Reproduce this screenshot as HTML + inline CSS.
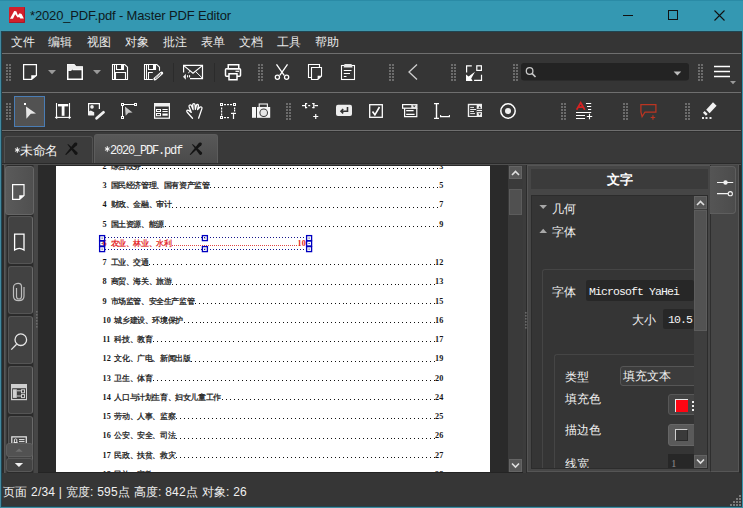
<!DOCTYPE html>
<html><head><meta charset="utf-8">
<style>
*{box-sizing:border-box;margin:0;padding:0}
html,body{width:743px;height:508px;overflow:hidden;background:#353535;font-family:"Liberation Sans",sans-serif}
.a{position:absolute}
svg{position:absolute;overflow:visible}
#title{left:0;top:0;width:743px;height:31px;background:#3498b2}
#title .t{left:30px;top:8px;font-size:13px;color:#0e1a20;letter-spacing:-0.15px;white-space:nowrap}
.menu{top:34px;font-size:12px;color:#eaeaea;white-space:nowrap}
.hl{left:1px;width:741px;height:1px;background:#6f6f6f}
.grip{width:5px;background-image:radial-gradient(circle,#8a8a8a 0.7px,transparent 0.9px);background-size:2.5px 2.5px}
.num,.pn{font-family:"Liberation Serif",serif;font-weight:bold;font-size:8.2px;letter-spacing:0.2px;line-height:8px;white-space:nowrap}
.txt{font-family:"Liberation Serif",serif;font-weight:normal;font-size:8px;letter-spacing:-0.4px;line-height:8px;-webkit-text-stroke:0.25px currentColor;white-space:nowrap}
.dt{position:absolute;width:1.25px;height:1.25px;background:#111}
.dots{height:1.2px;background-image:linear-gradient(90deg,#000 0 1.2px,transparent 1.2px);background-size:4px 1.2px;background-position:right top;background-repeat:repeat-x}
.vsep{width:1px;background:#2a2a2a}
</style></head><body>
<!-- window border -->
<div class="a" style="left:0;top:0;width:743px;height:508px;background:#353535"></div>

<!-- title bar -->
<div id="title" class="a">
  <div class="a" style="left:9px;top:7px;width:16px;height:16px;background:#d2202b;border-radius:1px;box-shadow:inset -1px -1px 0 #a51a2a"></div>
  <svg style="left:0;top:0" width="40" height="31" viewBox="0 0 40 31"><path d="M10 18.8 L14.2 11 L16.3 11.3 L17.9 15.2 L19.6 13.2 L21.6 14 L23.8 18.4 L20.3 18.6 L19.2 17 L17.6 17.6 L15.2 14.2 L13 18.8 Z" fill="#fff"/></svg>
  <div class="a t">*2020_PDF.pdf - Master PDF Editor</div>
  <div class="a" style="left:623px;top:15px;width:10px;height:1px;background:#111"></div>
  <div class="a" style="left:668px;top:10px;width:10px;height:10px;border:1px solid #111"></div>
  <svg style="left:714px;top:10px" width="11" height="11" viewBox="0 0 11 11"><path d="M0.5 0.5 L10.5 10.5 M10.5 0.5 L0.5 10.5" stroke="#111" stroke-width="1.1"/></svg>
</div>

<!-- menu -->
<div class="a menu" style="left:11px">文件</div>
<div class="a menu" style="left:48px">编辑</div>
<div class="a menu" style="left:87px">视图</div>
<div class="a menu" style="left:125px">对象</div>
<div class="a menu" style="left:163px">批注</div>
<div class="a menu" style="left:201px">表单</div>
<div class="a menu" style="left:239px">文档</div>
<div class="a menu" style="left:277px">工具</div>
<div class="a menu" style="left:315px">帮助</div>

<div class="a hl" style="top:53px"></div>
<div class="a hl" style="top:92px"></div>
<div class="a hl" style="top:130px"></div>

<!-- TOOLBAR1 -->
<div id="tb1"><svg style="left:0;top:0" width="743" height="508" viewBox="0 0 743 508">
<defs>
<g id="grip" fill="#6c6c6c">
<rect x="0" y="0" width="2" height="2"/><rect x="3" y="0" width="2" height="2"/>
<rect x="0" y="3" width="2" height="2"/><rect x="3" y="3" width="2" height="2"/>
<rect x="0" y="6" width="2" height="2"/><rect x="3" y="6" width="2" height="2"/>
<rect x="0" y="9" width="2" height="2"/><rect x="3" y="9" width="2" height="2"/>
<rect x="0" y="12" width="2" height="2"/><rect x="3" y="12" width="2" height="2"/>
<rect x="0" y="15" width="2" height="2"/><rect x="3" y="15" width="2" height="2"/>
</g>
</defs>
<!-- grips toolbar1 -->
<use href="#grip" x="6" y="64"/><use href="#grip" x="258" y="64"/><use href="#grip" x="389" y="64"/>
<use href="#grip" x="451" y="64"/><use href="#grip" x="513" y="64"/><use href="#grip" x="698" y="64"/>
<!-- grips toolbar2 -->
<use href="#grip" x="6" y="103"/><use href="#grip" x="286" y="103"/><use href="#grip" x="561" y="103"/>
<use href="#grip" x="623" y="103"/><use href="#grip" x="685" y="103"/>

<g fill="none" stroke="#fff" stroke-width="1.5">
<!-- new doc -->
<path d="M23.6 64.6 H36.4 V75.5 L31.6 79.4 H23.6 Z" stroke-width="1.25"/>
<!-- folder -->
<path d="M67.75 64.75 H74 L76 67 H82.25 V79.25 H67.75 Z"/>
<path d="M72.5 69.5 H82.25"/>
<!-- save -->
<path d="M112.5 64.5 H124.8 L127.5 67.2 V79.5 H112.5 Z" stroke-width="1.1"/>
<path d="M114.5 65 V79" stroke-width="1"/>
<path d="M116.5 65 V69.5 H123.5 V65" stroke-width="1.1"/>
<path d="M115.5 79 V72.5 H125.5 V79" stroke-width="1.1"/>
<!-- save as -->
<path d="M152.8 79.5 H144.5 V64.5 H156.8 L159.5 67.2 V70.8" stroke-width="1.1"/>
<path d="M146.5 65 V79" stroke-width="1"/>
<path d="M148.5 65 V69.5 H155.5 V65" stroke-width="1.1"/>
<path d="M148.5 79 V72.5 H152.8" stroke-width="1.1"/>
<!-- printer -->
<rect x="228.25" y="64.75" width="10.5" height="4"/>
<rect x="225.5" y="68.75" width="15" height="7.5" rx="1"/>
<!-- copy -->
<path d="M311 77.5 H308.5 V64.5 H319.5 V67" stroke-width="1.1"/>
<path d="M311.5 67.5 H321.5 V76 L317.8 79.5 H311.5 Z" stroke-width="1.1"/>
<!-- clipboard -->
<rect x="341.5" y="65.5" width="13" height="14" stroke-width="1.1"/>
<!-- fit -->
<path d="M466.6 72.6 V65.8 H471.8" stroke-width="1.2"/>
<path d="M474.1 80.3 H481.5 V74.8" stroke-width="1.2"/>
<!-- hamburger -->
<path d="M714 66.5 H730 M714 71.5 H730 M714 76.5 H730"/>
</g>
<g fill="#fff">
<path d="M36.5 75.25 L31.25 75.25 L31.25 79.5 Z"/>
<path d="M67.5 64.5 H74 L76 66.5 H82.5 V69.5 H72.5 L71 71 H67.5 Z" fill="#ececec"/>
<path d="M321.8 75.8 L317.6 75.8 L317.6 79.8 Z"/>
<path d="M344.5 64 H351.5 L352.6 67.6 H343.6 Z" fill="#e8e8e8"/>
<rect x="121" y="65" width="2.5" height="4"/><rect x="153" y="65" width="2.5" height="4"/>
<path d="M466 74.6 L468.6 76.6 L475 71.8 L471.2 78.6 L472.6 80.9 H466 Z"/>
</g>
<g fill="#9a9a9a">
<path d="M48 70 H56 L52 74.2 Z"/>
<path d="M93 70 H101 L97 74.2 Z"/>
<path d="M730 81 H736 L733 84.2 Z"/>
</g>
<!-- save as pencil -->
<path d="M155 78.9 L161.6 73.1" stroke="#fff" stroke-width="3.2" stroke-linecap="round"/>
<path d="M155.4 78.5 L161.2 73.5" stroke="#353535" stroke-width="1.2" stroke-dasharray="1 0.6"/>
<!-- mail -->
<g fill="none" stroke="#fff" stroke-width="1.2">
<path d="M183.6 72.6 V65.4 H202.5 V78.6 H190"/>
<path d="M183.8 65.6 L193 73.2 L202.3 65.6"/>
<path d="M195.7 71.6 L202 77.8 M190.2 71.2 L188.2 73" stroke-width="1"/>
</g>
<path d="M183 76.7 L185.9 73.8 V79.7 Z" fill="#f0f0f0"/>
<rect x="187" y="75.2" width="1.1" height="2.2" fill="#fff"/><rect x="189" y="75.2" width="1.1" height="2.2" fill="#fff"/>
<!-- separators -->
<rect x="173" y="63" width="1" height="19" fill="#2b2b2b"/>
<rect x="214" y="63" width="1" height="19" fill="#2b2b2b"/>
<!-- printer details -->
<rect x="229" y="73.75" width="8" height="6" fill="#353535" stroke="#fff" stroke-width="1.5"/>
<path d="M235.5 71.3 H239" stroke="#fff" stroke-width="1.2"/>
<!-- scissors -->
<g fill="none" stroke="#fff" stroke-width="1.3">
<path d="M276.5 64.3 L284.2 75.3 M287.5 64.3 L279.8 75.3"/>
<circle cx="277.4" cy="77.3" r="2.1"/><circle cx="286.6" cy="77.3" r="2.1"/>
</g>
<!-- clipboard lines -->
<path d="M343.8 70.5 H351.5 M343.8 73.5 H350 M343.8 76.5 H346.5" stroke="#fff" stroke-width="1"/>
<!-- back arrow -->
<path d="M417 64.5 L409 72 L417 79.5" fill="none" stroke="#cfcfcf" stroke-width="1.3"/>
<!-- fit -->
<rect x="476.8" y="65.8" width="4.6" height="4.6" fill="none" stroke="#fff" stroke-width="1.2"/>
<!-- search -->
<rect x="521" y="63" width="168" height="17.5" rx="3" fill="#232323"/>
<circle cx="529.6" cy="71" r="3.3" fill="none" stroke="#c8c8c8" stroke-width="1.3"/>
<path d="M532 73.4 L535.5 77" stroke="#c8c8c8" stroke-width="1.6"/>
<path d="M673.6 71.6 H681.2 L677.4 75.5 Z" fill="#bdbdbd"/>
</svg>
</div>
<!-- TOOLBAR2 -->
<div id="tb2"><div class="a" style="left:14px;top:96px;width:31px;height:31px;background:#525252;border:1px solid #4a7db5"></div>
<svg style="left:0;top:0" width="743" height="508" viewBox="0 0 743 508">
<!-- cursor -->
<rect x="24" y="103" width="2" height="2" fill="#fff"/>
<path d="M26 106.5 L36 113.5 L30.8 113.8 L26.4 118.7 Z" fill="#e6e6e6"/>
<!-- T tool -->
<g stroke="#fff" fill="none">
<path d="M56.5 103 V117 M69.5 103 V117" stroke-width="1.1"/>
<path d="M56 117.4 H70" stroke-width="1.1"/>
</g>
<path d="M54.8 117.4 L57.2 115.6 V119.2 Z M71.2 117.4 L68.8 115.6 V119.2 Z" fill="#fff"/>
<rect x="58" y="104" width="10.2" height="2.4" fill="#fff"/>
<rect x="61.7" y="104" width="2.8" height="11.8" fill="#fff"/>
<!-- image edit -->
<path d="M88.6 115 V103.6 H99.4 V109" fill="none" stroke="#fff" stroke-width="1.2"/>
<circle cx="92" cy="106.9" r="1.8" fill="#f0f0f0"/>
<path d="M88.2 115.5 V111.8 L90.8 110.6 L94.2 112.2 V115.5 Z" fill="#f0f0f0"/>
<path d="M96.6 118.3 L103.5 112.3" stroke="#f0f0f0" stroke-width="2.8" stroke-linecap="round"/>
<!-- polyline arrow -->
<path d="M124 104.5 H134 M122.5 106 V116" stroke="#fff" stroke-width="1"/>
<g fill="none" stroke="#fff" stroke-width="1">
<rect x="121.5" y="103.5" width="2" height="2"/><rect x="134.5" y="103.5" width="2" height="2"/><rect x="121.5" y="116.5" width="2" height="2"/>
</g>
<path d="M124.9 106.5 L132.6 112.5 L128.6 112.8 L125.7 115.8 Z" fill="#c8c8c8"/>
<!-- form -->
<rect x="154.6" y="103.6" width="14.8" height="14.6" fill="none" stroke="#fff" stroke-width="1.2"/>
<rect x="154" y="103" width="16" height="3.5" fill="#f0f0f0"/>
<g stroke="#fff" fill="none" stroke-width="1">
<rect x="156.5" y="109.5" width="4" height="2"/><rect x="156.5" y="113.5" width="4" height="2.2"/>
<path d="M162.4 109.5 H167.7 M162.4 111.5 H167.7"/>
</g>
<rect x="162.4" y="113.5" width="5.3" height="2.2" fill="#fff"/>
<!-- hand -->
<path d="M192.5 118.2 L187.2 112.2 C186.3 111.1 186.9 109.6 188.4 110.3 L191.3 112.4 L189.1 106.7 C188.6 105.1 190.6 104.1 191.4 105.6 L193.1 109.6 L192.7 104.9 C192.6 103.3 194.9 103.2 195 104.8 L195.4 109.4 L196.4 105.4 C196.8 104 198.7 104.3 198.4 105.8 L197.6 109.6 L199.7 107.3 C200.7 106.3 202.5 107.1 201.9 108.6 L198.6 118.2" fill="none" stroke="#fff" stroke-width="1.3" stroke-linejoin="round" stroke-linecap="round"/>
<!-- select text area -->
<g fill="none" stroke="#fff" stroke-width="1">
<rect x="220.5" y="103.5" width="2" height="2"/><rect x="233.5" y="103.5" width="2" height="2"/><rect x="220.5" y="116.5" width="2" height="2"/>
</g>
<g fill="#fff">
<rect x="224" y="104" width="2" height="1.2"/><rect x="227" y="104" width="2" height="1.2"/><rect x="230" y="104" width="2" height="1.2"/>
<rect x="221" y="107.5" width="1.2" height="2"/><rect x="221" y="110.5" width="1.2" height="2"/><rect x="221" y="113.5" width="1.2" height="2"/>
<rect x="234" y="107.5" width="1.2" height="2"/><rect x="234" y="110" width="1.2" height="1.5"/>
<rect x="224" y="117" width="2" height="1.2"/><rect x="227" y="117" width="2" height="1.2"/>
<rect x="231" y="112.8" width="5" height="1.2"/><rect x="232.9" y="112.8" width="1.2" height="6.2"/>
</g>
<!-- camera -->
<rect x="252" y="107" width="4" height="10.8" fill="#f4f4f4"/>
<rect x="257" y="107" width="13.2" height="10.8" fill="#f4f4f4"/>
<rect x="259.2" y="104" width="8.2" height="3.5" fill="none" stroke="#f4f4f4" stroke-width="1.1"/>
<circle cx="263.7" cy="112.8" r="4.3" fill="#353535"/>
<circle cx="263.7" cy="112.8" r="3.3" fill="#e6e6e6"/>
<!-- link+ -->
<g fill="#fff">
<rect x="302" y="105" width="3" height="1.2"/>
<rect x="305" y="103" width="1.2" height="5.2"/><rect x="305" y="103" width="2.2" height="1.2"/><rect x="305" y="107" width="2.2" height="1.2"/>
<rect x="308.2" y="105" width="2" height="1.2"/>
<rect x="313.2" y="103" width="1.2" height="5.2"/><rect x="312.2" y="103" width="2.2" height="1.2"/><rect x="312.2" y="107" width="2.2" height="1.2"/>
<rect x="314.4" y="105" width="3.6" height="1.2"/>
</g>
<path d="M313.2 116.5 H318.3 M315.75 114 V119" stroke="#fff" stroke-width="1.2"/>
<!-- button -->
<rect x="336" y="104.7" width="16" height="11.2" rx="2" fill="#ededed"/>
<path d="M347.5 107 V111.2 H341 M343.2 109 L341 111.2 L343.2 113.4" fill="none" stroke="#353535" stroke-width="1.6"/>
<!-- checkbox -->
<rect x="369.7" y="104.7" width="12.6" height="12.6" fill="none" stroke="#fff" stroke-width="1.3"/>
<path d="M372.5 111.5 L374.9 114.8 L379.5 107" fill="none" stroke="#fff" stroke-width="1.6"/>
<!-- combo -->
<g fill="none" stroke="#fff" stroke-width="1.2">
<rect x="402.6" y="104.6" width="14.2" height="3.6"/>
<path d="M404.6 108.2 V116.6 H416.8 V108.2"/>
</g>
<path d="M406.2 110.6 H413.6 M406.2 114.4 H414.6" stroke="#fff" stroke-width="1.1"/>
<rect x="411.3" y="104" width="5.8" height="4.6" fill="#e8e8e8"/>
<path d="M412.6 105.4 H415.8 L414.2 107.2 Z" fill="#353535"/>
<!-- text field -->
<g fill="none" stroke="#fff">
<path d="M434 103.6 H439 M436.5 103.6 V118.4 M434 118.4 H439" stroke-width="1.4"/>
<path d="M440 116.6 H449.5 M440.6 115 V117.2 M449.4 115 V117.2" stroke-width="1.1"/>
</g>
<!-- list -->
<rect x="467.8" y="103.8" width="14.2" height="13.2" fill="#f0f0f0"/>
<rect x="469.2" y="105.2" width="7.5" height="10.7" fill="#353535"/>
<path d="M470.2 107.4 H474 M470.2 109.5 H476 M470.2 111.5 H474 M470.2 113.6 H475" stroke="#fff" stroke-width="0.9"/>
<rect x="476.7" y="108.9" width="5.3" height="1" fill="#353535"/>
<rect x="476.7" y="111.1" width="5.3" height="1" fill="#353535"/>
<path d="M478.3 108.2 H481 L479.65 106 Z M478.3 113.2 H481 L479.65 115.4 Z" fill="#353535"/>
<!-- radio -->
<circle cx="508" cy="111" r="7.2" fill="none" stroke="#fff" stroke-width="1.5"/>
<circle cx="508" cy="111" r="3" fill="#f0f0f0"/>
<!-- A lines + -->
<path d="M576.6 109.8 L580.7 102.8 L584.8 109.8 M578.3 107.2 H583.1" fill="none" stroke="#d42222" stroke-width="1.7"/>
<path d="M586 103.5 H591.2 M587 106.5 H591.2 M588 109.5 H591.2 M576 112.5 H591.2 M576 115.5 H585 M576 118.5 H585" stroke="#fff" stroke-width="1.1"/>
<path d="M586.8 116.5 H592.2 M589.5 113.8 V119.2" stroke="#fff" stroke-width="1.1"/>
<!-- comment red -->
<path d="M640.9 104.6 H655.9 V112 H645 L642.1 116.6 L640.9 112 Z" fill="none" stroke="#bb3522" stroke-width="1.25" stroke-linejoin="miter"/>
<path d="M650.7 117.5 H655.2 M652.95 115.3 V119.8" stroke="#bb3522" stroke-width="1.2"/>
<!-- eraser -->
<path d="M706.2 109.8 L713 102.2 L716.6 105.8 L709.6 113.2 Z" fill="#f2f2f2"/>
<path d="M703.8 111.8 L706.8 114.8" stroke="#f2f2f2" stroke-width="2.5"/>
<rect x="702" y="117" width="2" height="2" fill="#e8e8e8"/><rect x="705.5" y="117" width="2" height="2" fill="#e8e8e8"/><rect x="709.5" y="117" width="2" height="2" fill="#e8e8e8"/>
</svg>
</div>
<!-- TABS -->
<div id="tabs"><div class="a" style="left:1px;top:131px;width:741px;height:33px;background:#393939"></div>
<div class="a" style="left:1px;top:131px;width:741px;height:1px;background:#2e2e2e"></div>
<div class="a" style="left:4px;top:136px;width:89px;height:28px;background:#3c3c3c;border:1px solid #515151;border-bottom:none;border-radius:3px 3px 0 0"></div>
<div class="a" style="left:94px;top:134px;width:124px;height:30px;background:linear-gradient(#585858,#4a4a4a);border:1px solid #5c5c5c;border-bottom:none;border-radius:3px 3px 0 0"></div>
<div class="a" style="left:20px;top:141.5px;font-size:13px;letter-spacing:-0.5px;color:#f4f4f4;white-space:nowrap">未命名</div>
<div class="a" style="left:110px;top:144px;font-size:12px;letter-spacing:-1.2px;color:#f4f4f4;white-space:nowrap;font-family:'Liberation Mono',monospace">2020_PDF.pdf</div>
<svg style="left:0;top:0" width="743" height="508" viewBox="0 0 743 508">
<g fill="#141414" transform="translate(0 0)">
<path d="M200 142.6 C201.7 142.4 202.4 143.9 201.3 145.2 L190.6 154.9 L189.7 154.6 L198.4 143.6 C198.9 143 199.4 142.7 200 142.6 Z"/>
<path d="M191.8 144.2 L192.9 144.3 L201.6 152 C202.6 153 202.1 155 200.5 154.9 C199.9 154.8 199.5 154.4 199.1 153.9 Z"/>
</g>
<g fill="#141414" transform="translate(-124.5 0)">
<path d="M200 142.6 C201.7 142.4 202.4 143.9 201.3 145.2 L190.6 154.9 L189.7 154.6 L198.4 143.6 C198.9 143 199.4 142.7 200 142.6 Z"/>
<path d="M191.8 144.2 L192.9 144.3 L201.6 152 C202.6 153 202.1 155 200.5 154.9 C199.9 154.8 199.5 154.4 199.1 153.9 Z"/>
</g>
<g stroke="#f4f4f4" stroke-width="1.1">
<path d="M17.3 147.3 V152.7 M15 148.6 L19.6 151.4 M15 151.4 L19.6 148.6"/>
<path d="M107.3 146.3 V151.7 M105 147.6 L109.6 150.4 M105 150.4 L109.6 147.6"/>
</g>
</svg>
<div class="a" style="left:1px;top:163px;width:741px;height:1px;background:#2a2a2a"></div>
<div class="a" style="left:1px;top:164px;width:741px;height:1px;background:#4f4f4f"></div>
</div>
<!-- SIDEBAR -->
<div id="side"><div class="a" style="left:1px;top:165px;width:37px;height:308px;background:#353535"></div>
<div class="a" style="left:1px;top:165px;width:1px;height:308px;background:#1f4552"></div>
<div class="a" style="left:2px;top:165px;width:2px;height:308px;background:#2b2b2b"></div>
<div class="a" style="left:4px;top:165px;width:1px;height:308px;background:#575757"></div>
<div class="a" style="left:5px;top:165px;width:1px;height:308px;background:#4a4a4a"></div>
<div class="a" style="left:6px;top:165px;width:1px;height:308px;background:#3a3a3a"></div>
<div class="a" style="left:7px;top:165px;width:26px;height:308px;background:#2b2b2b"></div>
<div class="a" style="left:33px;top:165px;width:1px;height:308px;background:#3a3a3a"></div>
<div class="a" style="left:34px;top:165px;width:4px;height:308px;background:#464646"></div>
<div class="a" style="left:5px;top:166px;width:29px;height:49px;background:linear-gradient(90deg,#5a5a5a,#505050);border:1px solid #666;border-radius:3px"></div>
<div class="a" style="left:8px;top:216px;width:25px;height:48px;background:#424242;border:1px solid #555;border-right-color:#6a6a6a;border-radius:3px"></div>
<div class="a" style="left:8px;top:266px;width:25px;height:48px;background:#424242;border:1px solid #555;border-right-color:#6a6a6a;border-radius:3px"></div>
<div class="a" style="left:8px;top:316px;width:25px;height:48px;background:#424242;border:1px solid #555;border-right-color:#6a6a6a;border-radius:3px"></div>
<div class="a" style="left:8px;top:366px;width:25px;height:48px;background:#424242;border:1px solid #555;border-right-color:#6a6a6a;border-radius:3px"></div>
<div class="a" style="left:8px;top:416px;width:25px;height:48px;background:#424242;border:1px solid #555;border-right-color:#6a6a6a;border-radius:3px"></div>
<svg style="left:0;top:0" width="743" height="508" viewBox="0 0 743 508">
<!-- doc -->
<path d="M12.6 184.6 H24 V195.5 L19.6 199.4 H12.6 Z" fill="none" stroke="#fff" stroke-width="1.2"/>
<path d="M24 195.25 L19.25 195.25 L19.25 199.5 Z" fill="#fff"/>
<!-- bookmark -->
<path d="M14.6 234.2 H24 V250 Q19.3 246.6 14.6 250 Z" fill="none" stroke="#fff" stroke-width="1.3"/>
<!-- clip -->
<path d="M16.5 288 V296.5 C16.5 298 17.5 299 19 299 C20.5 299 21.5 298 21.5 296.5 V286.5 C21.5 284.5 20 283.3 18.3 283.3 C16.3 283.3 13.5 284.5 13.5 287 V296 C13.5 299 15.7 300.7 18.7 300.7 C21.8 300.7 24 299 24 296 V287" fill="none" stroke="#bdbdbd" stroke-width="1.2"/>
<!-- search -->
<circle cx="20.8" cy="339.7" r="5.8" fill="none" stroke="#e6e6e6" stroke-width="1.3"/>
<path d="M16.6 344.2 L11.3 349.6" stroke="#e6e6e6" stroke-width="1.3"/>
<!-- layers -->
<rect x="11" y="384" width="16" height="16.2" fill="#cfcfcf"/>
<rect x="12.2" y="388.2" width="13.8" height="10.8" fill="#3f3f3f"/>
<rect x="13" y="389.3" width="3.8" height="8.6" fill="#cfcfcf"/>
<path d="M16.8 390.8 H21 M16.8 396 H21" stroke="#cfcfcf" stroke-width="1"/>
<rect x="21.5" y="389.8" width="3" height="3" fill="#3f3f3f" stroke="#cfcfcf" stroke-width="1"/>
<rect x="21.5" y="394.6" width="3" height="3" fill="#3f3f3f" stroke="#cfcfcf" stroke-width="1"/>
<!-- icon6 partial -->
<path d="M11.8 444 V436.8 H26.3 V444" fill="none" stroke="#e6e6e6" stroke-width="1.2"/>
<path d="M13.6 442.5 H17.6 M14.4 442.5 V439.8 C14.4 438.5 16.8 438.5 16.8 439.8 V442.5" fill="none" stroke="#e6e6e6" stroke-width="1"/>
<path d="M19 439.6 H24.5 M19 441.6 H24.5" stroke="#e6e6e6" stroke-width="1"/>
<!-- splitter grip -->
<g fill="#6a6a6a"><rect x="36" y="311" width="1.6" height="1.6"/><rect x="36" y="314" width="1.6" height="1.6"/><rect x="36" y="317" width="1.6" height="1.6"/><rect x="36" y="320" width="1.6" height="1.6"/><rect x="36" y="323" width="1.6" height="1.6"/><rect x="36" y="326" width="1.6" height="1.6"/></g>
</svg>
<div class="a" style="left:6px;top:443px;width:26.5px;height:14px;background:#525252;border:1px solid #5e5e5e;border-radius:3px"></div>
<div class="a" style="left:6px;top:458px;width:26.5px;height:14px;background:#434343;border:1px solid #585858;border-radius:3px"></div>
<svg style="left:0;top:0" width="743" height="508" viewBox="0 0 743 508">
<path d="M15.4 451.8 H22.7 L19.05 448.4 Z" fill="#6e6e6e"/>
<path d="M14.8 462.9 H23.1 L18.95 467 Z" fill="#f0f0f0"/>
</svg>
</div>
<!-- DOC -->
<div id="doc">
<div class="a" style="left:38px;top:165px;width:471px;height:308px;background:#2a2a2a"></div>
<div class="a" id="page" style="left:56px;top:165px;width:434px;height:307px;background:#fff;overflow:hidden">
<div class="a num" style="left:46.5px;top:-2.10px;color:#161616">2</div>
<div class="a txt" style="left:54.599999999999994px;top:-2.20px;color:#161616">综合政务</div>
<i class="dt" style="left:86px;top:3px"></i>
<i class="dt" style="left:90px;top:3px"></i>
<i class="dt" style="left:94px;top:3px"></i>
<i class="dt" style="left:98px;top:3px"></i>
<i class="dt" style="left:102px;top:3px"></i>
<i class="dt" style="left:106px;top:3px"></i>
<i class="dt" style="left:110px;top:3px"></i>
<i class="dt" style="left:114px;top:3px"></i>
<i class="dt" style="left:118px;top:3px"></i>
<i class="dt" style="left:122px;top:3px"></i>
<i class="dt" style="left:126px;top:3px"></i>
<i class="dt" style="left:130px;top:3px"></i>
<i class="dt" style="left:134px;top:3px"></i>
<i class="dt" style="left:138px;top:3px"></i>
<i class="dt" style="left:142px;top:3px"></i>
<i class="dt" style="left:146px;top:3px"></i>
<i class="dt" style="left:150px;top:3px"></i>
<i class="dt" style="left:154px;top:3px"></i>
<i class="dt" style="left:158px;top:3px"></i>
<i class="dt" style="left:162px;top:3px"></i>
<i class="dt" style="left:166px;top:3px"></i>
<i class="dt" style="left:170px;top:3px"></i>
<i class="dt" style="left:174px;top:3px"></i>
<i class="dt" style="left:178px;top:3px"></i>
<i class="dt" style="left:182px;top:3px"></i>
<i class="dt" style="left:186px;top:3px"></i>
<i class="dt" style="left:190px;top:3px"></i>
<i class="dt" style="left:194px;top:3px"></i>
<i class="dt" style="left:198px;top:3px"></i>
<i class="dt" style="left:202px;top:3px"></i>
<i class="dt" style="left:206px;top:3px"></i>
<i class="dt" style="left:210px;top:3px"></i>
<i class="dt" style="left:214px;top:3px"></i>
<i class="dt" style="left:218px;top:3px"></i>
<i class="dt" style="left:222px;top:3px"></i>
<i class="dt" style="left:226px;top:3px"></i>
<i class="dt" style="left:230px;top:3px"></i>
<i class="dt" style="left:234px;top:3px"></i>
<i class="dt" style="left:237px;top:3px"></i>
<i class="dt" style="left:241px;top:3px"></i>
<i class="dt" style="left:245px;top:3px"></i>
<i class="dt" style="left:249px;top:3px"></i>
<i class="dt" style="left:253px;top:3px"></i>
<i class="dt" style="left:257px;top:3px"></i>
<i class="dt" style="left:261px;top:3px"></i>
<i class="dt" style="left:265px;top:3px"></i>
<i class="dt" style="left:269px;top:3px"></i>
<i class="dt" style="left:273px;top:3px"></i>
<i class="dt" style="left:277px;top:3px"></i>
<i class="dt" style="left:281px;top:3px"></i>
<i class="dt" style="left:285px;top:3px"></i>
<i class="dt" style="left:289px;top:3px"></i>
<i class="dt" style="left:293px;top:3px"></i>
<i class="dt" style="left:297px;top:3px"></i>
<i class="dt" style="left:301px;top:3px"></i>
<i class="dt" style="left:305px;top:3px"></i>
<i class="dt" style="left:309px;top:3px"></i>
<i class="dt" style="left:313px;top:3px"></i>
<i class="dt" style="left:317px;top:3px"></i>
<i class="dt" style="left:321px;top:3px"></i>
<i class="dt" style="left:325px;top:3px"></i>
<i class="dt" style="left:329px;top:3px"></i>
<i class="dt" style="left:333px;top:3px"></i>
<i class="dt" style="left:337px;top:3px"></i>
<i class="dt" style="left:341px;top:3px"></i>
<i class="dt" style="left:345px;top:3px"></i>
<i class="dt" style="left:349px;top:3px"></i>
<i class="dt" style="left:353px;top:3px"></i>
<i class="dt" style="left:357px;top:3px"></i>
<i class="dt" style="left:361px;top:3px"></i>
<i class="dt" style="left:365px;top:3px"></i>
<i class="dt" style="left:369px;top:3px"></i>
<i class="dt" style="left:373px;top:3px"></i>
<i class="dt" style="left:377px;top:3px"></i>
<i class="dt" style="left:381px;top:3px"></i>
<div class="a pn" style="right:46.5px;top:-2.10px;color:#161616">3</div>
<div class="a num" style="left:46.5px;top:17.15px;color:#161616">3</div>
<div class="a txt" style="left:54.599999999999994px;top:17.05px;color:#161616">国民经济管理、国有资产监管</div>
<i class="dt" style="left:154px;top:22px"></i>
<i class="dt" style="left:158px;top:22px"></i>
<i class="dt" style="left:162px;top:22px"></i>
<i class="dt" style="left:166px;top:22px"></i>
<i class="dt" style="left:170px;top:22px"></i>
<i class="dt" style="left:174px;top:22px"></i>
<i class="dt" style="left:178px;top:22px"></i>
<i class="dt" style="left:182px;top:22px"></i>
<i class="dt" style="left:186px;top:22px"></i>
<i class="dt" style="left:190px;top:22px"></i>
<i class="dt" style="left:194px;top:22px"></i>
<i class="dt" style="left:198px;top:22px"></i>
<i class="dt" style="left:202px;top:22px"></i>
<i class="dt" style="left:206px;top:22px"></i>
<i class="dt" style="left:210px;top:22px"></i>
<i class="dt" style="left:214px;top:22px"></i>
<i class="dt" style="left:218px;top:22px"></i>
<i class="dt" style="left:222px;top:22px"></i>
<i class="dt" style="left:226px;top:22px"></i>
<i class="dt" style="left:230px;top:22px"></i>
<i class="dt" style="left:234px;top:22px"></i>
<i class="dt" style="left:238px;top:22px"></i>
<i class="dt" style="left:242px;top:22px"></i>
<i class="dt" style="left:246px;top:22px"></i>
<i class="dt" style="left:250px;top:22px"></i>
<i class="dt" style="left:254px;top:22px"></i>
<i class="dt" style="left:258px;top:22px"></i>
<i class="dt" style="left:262px;top:22px"></i>
<i class="dt" style="left:266px;top:22px"></i>
<i class="dt" style="left:270px;top:22px"></i>
<i class="dt" style="left:274px;top:22px"></i>
<i class="dt" style="left:278px;top:22px"></i>
<i class="dt" style="left:282px;top:22px"></i>
<i class="dt" style="left:286px;top:22px"></i>
<i class="dt" style="left:290px;top:22px"></i>
<i class="dt" style="left:294px;top:22px"></i>
<i class="dt" style="left:298px;top:22px"></i>
<i class="dt" style="left:302px;top:22px"></i>
<i class="dt" style="left:306px;top:22px"></i>
<i class="dt" style="left:310px;top:22px"></i>
<i class="dt" style="left:313px;top:22px"></i>
<i class="dt" style="left:317px;top:22px"></i>
<i class="dt" style="left:321px;top:22px"></i>
<i class="dt" style="left:325px;top:22px"></i>
<i class="dt" style="left:329px;top:22px"></i>
<i class="dt" style="left:333px;top:22px"></i>
<i class="dt" style="left:337px;top:22px"></i>
<i class="dt" style="left:341px;top:22px"></i>
<i class="dt" style="left:345px;top:22px"></i>
<i class="dt" style="left:349px;top:22px"></i>
<i class="dt" style="left:353px;top:22px"></i>
<i class="dt" style="left:357px;top:22px"></i>
<i class="dt" style="left:361px;top:22px"></i>
<i class="dt" style="left:365px;top:22px"></i>
<i class="dt" style="left:369px;top:22px"></i>
<i class="dt" style="left:373px;top:22px"></i>
<i class="dt" style="left:377px;top:22px"></i>
<i class="dt" style="left:381px;top:22px"></i>
<div class="a pn" style="right:46.5px;top:17.15px;color:#161616">5</div>
<div class="a num" style="left:46.5px;top:36.40px;color:#161616">4</div>
<div class="a txt" style="left:54.599999999999994px;top:36.30px;color:#161616">财政、金融、审计</div>
<i class="dt" style="left:116px;top:42px"></i>
<i class="dt" style="left:120px;top:42px"></i>
<i class="dt" style="left:124px;top:42px"></i>
<i class="dt" style="left:128px;top:42px"></i>
<i class="dt" style="left:132px;top:42px"></i>
<i class="dt" style="left:136px;top:42px"></i>
<i class="dt" style="left:140px;top:42px"></i>
<i class="dt" style="left:144px;top:42px"></i>
<i class="dt" style="left:148px;top:42px"></i>
<i class="dt" style="left:152px;top:42px"></i>
<i class="dt" style="left:156px;top:42px"></i>
<i class="dt" style="left:160px;top:42px"></i>
<i class="dt" style="left:164px;top:42px"></i>
<i class="dt" style="left:168px;top:42px"></i>
<i class="dt" style="left:172px;top:42px"></i>
<i class="dt" style="left:176px;top:42px"></i>
<i class="dt" style="left:180px;top:42px"></i>
<i class="dt" style="left:184px;top:42px"></i>
<i class="dt" style="left:188px;top:42px"></i>
<i class="dt" style="left:192px;top:42px"></i>
<i class="dt" style="left:197px;top:42px"></i>
<i class="dt" style="left:201px;top:42px"></i>
<i class="dt" style="left:205px;top:42px"></i>
<i class="dt" style="left:209px;top:42px"></i>
<i class="dt" style="left:213px;top:42px"></i>
<i class="dt" style="left:217px;top:42px"></i>
<i class="dt" style="left:221px;top:42px"></i>
<i class="dt" style="left:225px;top:42px"></i>
<i class="dt" style="left:229px;top:42px"></i>
<i class="dt" style="left:233px;top:42px"></i>
<i class="dt" style="left:237px;top:42px"></i>
<i class="dt" style="left:241px;top:42px"></i>
<i class="dt" style="left:245px;top:42px"></i>
<i class="dt" style="left:249px;top:42px"></i>
<i class="dt" style="left:253px;top:42px"></i>
<i class="dt" style="left:257px;top:42px"></i>
<i class="dt" style="left:261px;top:42px"></i>
<i class="dt" style="left:265px;top:42px"></i>
<i class="dt" style="left:269px;top:42px"></i>
<i class="dt" style="left:273px;top:42px"></i>
<i class="dt" style="left:277px;top:42px"></i>
<i class="dt" style="left:281px;top:42px"></i>
<i class="dt" style="left:285px;top:42px"></i>
<i class="dt" style="left:289px;top:42px"></i>
<i class="dt" style="left:293px;top:42px"></i>
<i class="dt" style="left:297px;top:42px"></i>
<i class="dt" style="left:301px;top:42px"></i>
<i class="dt" style="left:305px;top:42px"></i>
<i class="dt" style="left:309px;top:42px"></i>
<i class="dt" style="left:313px;top:42px"></i>
<i class="dt" style="left:317px;top:42px"></i>
<i class="dt" style="left:321px;top:42px"></i>
<i class="dt" style="left:325px;top:42px"></i>
<i class="dt" style="left:329px;top:42px"></i>
<i class="dt" style="left:333px;top:42px"></i>
<i class="dt" style="left:337px;top:42px"></i>
<i class="dt" style="left:341px;top:42px"></i>
<i class="dt" style="left:345px;top:42px"></i>
<i class="dt" style="left:349px;top:42px"></i>
<i class="dt" style="left:353px;top:42px"></i>
<i class="dt" style="left:357px;top:42px"></i>
<i class="dt" style="left:361px;top:42px"></i>
<i class="dt" style="left:365px;top:42px"></i>
<i class="dt" style="left:369px;top:42px"></i>
<i class="dt" style="left:373px;top:42px"></i>
<i class="dt" style="left:377px;top:42px"></i>
<i class="dt" style="left:381px;top:42px"></i>
<div class="a pn" style="right:46.5px;top:36.40px;color:#161616">7</div>
<div class="a num" style="left:46.5px;top:55.65px;color:#161616">5</div>
<div class="a txt" style="left:54.599999999999994px;top:55.55px;color:#161616">国土资源、能源</div>
<i class="dt" style="left:109px;top:61px"></i>
<i class="dt" style="left:113px;top:61px"></i>
<i class="dt" style="left:117px;top:61px"></i>
<i class="dt" style="left:121px;top:61px"></i>
<i class="dt" style="left:125px;top:61px"></i>
<i class="dt" style="left:129px;top:61px"></i>
<i class="dt" style="left:133px;top:61px"></i>
<i class="dt" style="left:137px;top:61px"></i>
<i class="dt" style="left:141px;top:61px"></i>
<i class="dt" style="left:145px;top:61px"></i>
<i class="dt" style="left:149px;top:61px"></i>
<i class="dt" style="left:153px;top:61px"></i>
<i class="dt" style="left:157px;top:61px"></i>
<i class="dt" style="left:161px;top:61px"></i>
<i class="dt" style="left:165px;top:61px"></i>
<i class="dt" style="left:169px;top:61px"></i>
<i class="dt" style="left:173px;top:61px"></i>
<i class="dt" style="left:177px;top:61px"></i>
<i class="dt" style="left:181px;top:61px"></i>
<i class="dt" style="left:185px;top:61px"></i>
<i class="dt" style="left:189px;top:61px"></i>
<i class="dt" style="left:193px;top:61px"></i>
<i class="dt" style="left:197px;top:61px"></i>
<i class="dt" style="left:201px;top:61px"></i>
<i class="dt" style="left:205px;top:61px"></i>
<i class="dt" style="left:209px;top:61px"></i>
<i class="dt" style="left:213px;top:61px"></i>
<i class="dt" style="left:217px;top:61px"></i>
<i class="dt" style="left:221px;top:61px"></i>
<i class="dt" style="left:225px;top:61px"></i>
<i class="dt" style="left:229px;top:61px"></i>
<i class="dt" style="left:233px;top:61px"></i>
<i class="dt" style="left:237px;top:61px"></i>
<i class="dt" style="left:241px;top:61px"></i>
<i class="dt" style="left:245px;top:61px"></i>
<i class="dt" style="left:249px;top:61px"></i>
<i class="dt" style="left:253px;top:61px"></i>
<i class="dt" style="left:257px;top:61px"></i>
<i class="dt" style="left:261px;top:61px"></i>
<i class="dt" style="left:265px;top:61px"></i>
<i class="dt" style="left:269px;top:61px"></i>
<i class="dt" style="left:273px;top:61px"></i>
<i class="dt" style="left:277px;top:61px"></i>
<i class="dt" style="left:281px;top:61px"></i>
<i class="dt" style="left:285px;top:61px"></i>
<i class="dt" style="left:289px;top:61px"></i>
<i class="dt" style="left:293px;top:61px"></i>
<i class="dt" style="left:297px;top:61px"></i>
<i class="dt" style="left:301px;top:61px"></i>
<i class="dt" style="left:305px;top:61px"></i>
<i class="dt" style="left:309px;top:61px"></i>
<i class="dt" style="left:313px;top:61px"></i>
<i class="dt" style="left:317px;top:61px"></i>
<i class="dt" style="left:321px;top:61px"></i>
<i class="dt" style="left:325px;top:61px"></i>
<i class="dt" style="left:329px;top:61px"></i>
<i class="dt" style="left:333px;top:61px"></i>
<i class="dt" style="left:337px;top:61px"></i>
<i class="dt" style="left:341px;top:61px"></i>
<i class="dt" style="left:345px;top:61px"></i>
<i class="dt" style="left:349px;top:61px"></i>
<i class="dt" style="left:353px;top:61px"></i>
<i class="dt" style="left:357px;top:61px"></i>
<i class="dt" style="left:361px;top:61px"></i>
<i class="dt" style="left:365px;top:61px"></i>
<i class="dt" style="left:369px;top:61px"></i>
<i class="dt" style="left:373px;top:61px"></i>
<i class="dt" style="left:377px;top:61px"></i>
<i class="dt" style="left:381px;top:61px"></i>
<div class="a pn" style="right:46.5px;top:55.65px;color:#161616">9</div>
<div class="a num" style="left:46.5px;top:74.90px;color:#e41e1e">6</div>
<div class="a txt" style="left:54.599999999999994px;top:74.80px;color:#e41e1e">农业、林业、水利</div>
<div class="a" style="left:115.9px;top:80.40px;width:125.6px;height:1px;background-image:repeating-linear-gradient(90deg,#e04848 0 1.3px,transparent 1.3px 2px)"></div>
<div class="a pn" style="right:184px;top:74.90px;color:#e41e1e">10</div>
<div class="a num" style="left:46.5px;top:94.15px;color:#161616">7</div>
<div class="a txt" style="left:54.599999999999994px;top:94.05px;color:#161616">工业、交通</div>
<i class="dt" style="left:93px;top:99px"></i>
<i class="dt" style="left:97px;top:99px"></i>
<i class="dt" style="left:101px;top:99px"></i>
<i class="dt" style="left:105px;top:99px"></i>
<i class="dt" style="left:109px;top:99px"></i>
<i class="dt" style="left:113px;top:99px"></i>
<i class="dt" style="left:117px;top:99px"></i>
<i class="dt" style="left:121px;top:99px"></i>
<i class="dt" style="left:125px;top:99px"></i>
<i class="dt" style="left:130px;top:99px"></i>
<i class="dt" style="left:134px;top:99px"></i>
<i class="dt" style="left:138px;top:99px"></i>
<i class="dt" style="left:142px;top:99px"></i>
<i class="dt" style="left:146px;top:99px"></i>
<i class="dt" style="left:150px;top:99px"></i>
<i class="dt" style="left:154px;top:99px"></i>
<i class="dt" style="left:158px;top:99px"></i>
<i class="dt" style="left:162px;top:99px"></i>
<i class="dt" style="left:166px;top:99px"></i>
<i class="dt" style="left:170px;top:99px"></i>
<i class="dt" style="left:174px;top:99px"></i>
<i class="dt" style="left:178px;top:99px"></i>
<i class="dt" style="left:182px;top:99px"></i>
<i class="dt" style="left:186px;top:99px"></i>
<i class="dt" style="left:190px;top:99px"></i>
<i class="dt" style="left:194px;top:99px"></i>
<i class="dt" style="left:198px;top:99px"></i>
<i class="dt" style="left:202px;top:99px"></i>
<i class="dt" style="left:206px;top:99px"></i>
<i class="dt" style="left:210px;top:99px"></i>
<i class="dt" style="left:214px;top:99px"></i>
<i class="dt" style="left:218px;top:99px"></i>
<i class="dt" style="left:222px;top:99px"></i>
<i class="dt" style="left:226px;top:99px"></i>
<i class="dt" style="left:230px;top:99px"></i>
<i class="dt" style="left:234px;top:99px"></i>
<i class="dt" style="left:238px;top:99px"></i>
<i class="dt" style="left:242px;top:99px"></i>
<i class="dt" style="left:246px;top:99px"></i>
<i class="dt" style="left:250px;top:99px"></i>
<i class="dt" style="left:254px;top:99px"></i>
<i class="dt" style="left:258px;top:99px"></i>
<i class="dt" style="left:262px;top:99px"></i>
<i class="dt" style="left:266px;top:99px"></i>
<i class="dt" style="left:270px;top:99px"></i>
<i class="dt" style="left:274px;top:99px"></i>
<i class="dt" style="left:278px;top:99px"></i>
<i class="dt" style="left:282px;top:99px"></i>
<i class="dt" style="left:286px;top:99px"></i>
<i class="dt" style="left:290px;top:99px"></i>
<i class="dt" style="left:294px;top:99px"></i>
<i class="dt" style="left:298px;top:99px"></i>
<i class="dt" style="left:302px;top:99px"></i>
<i class="dt" style="left:306px;top:99px"></i>
<i class="dt" style="left:310px;top:99px"></i>
<i class="dt" style="left:314px;top:99px"></i>
<i class="dt" style="left:318px;top:99px"></i>
<i class="dt" style="left:322px;top:99px"></i>
<i class="dt" style="left:326px;top:99px"></i>
<i class="dt" style="left:330px;top:99px"></i>
<i class="dt" style="left:334px;top:99px"></i>
<i class="dt" style="left:338px;top:99px"></i>
<i class="dt" style="left:342px;top:99px"></i>
<i class="dt" style="left:346px;top:99px"></i>
<i class="dt" style="left:350px;top:99px"></i>
<i class="dt" style="left:354px;top:99px"></i>
<i class="dt" style="left:358px;top:99px"></i>
<i class="dt" style="left:362px;top:99px"></i>
<i class="dt" style="left:366px;top:99px"></i>
<i class="dt" style="left:370px;top:99px"></i>
<i class="dt" style="left:374px;top:99px"></i>
<i class="dt" style="left:378px;top:99px"></i>
<div class="a pn" style="right:46.5px;top:94.15px;color:#161616">12</div>
<div class="a num" style="left:46.5px;top:113.40px;color:#161616">8</div>
<div class="a txt" style="left:54.599999999999994px;top:113.30px;color:#161616">商贸、海关、旅游</div>
<i class="dt" style="left:116px;top:119px"></i>
<i class="dt" style="left:120px;top:119px"></i>
<i class="dt" style="left:124px;top:119px"></i>
<i class="dt" style="left:128px;top:119px"></i>
<i class="dt" style="left:132px;top:119px"></i>
<i class="dt" style="left:136px;top:119px"></i>
<i class="dt" style="left:140px;top:119px"></i>
<i class="dt" style="left:144px;top:119px"></i>
<i class="dt" style="left:148px;top:119px"></i>
<i class="dt" style="left:152px;top:119px"></i>
<i class="dt" style="left:156px;top:119px"></i>
<i class="dt" style="left:160px;top:119px"></i>
<i class="dt" style="left:164px;top:119px"></i>
<i class="dt" style="left:168px;top:119px"></i>
<i class="dt" style="left:172px;top:119px"></i>
<i class="dt" style="left:176px;top:119px"></i>
<i class="dt" style="left:180px;top:119px"></i>
<i class="dt" style="left:184px;top:119px"></i>
<i class="dt" style="left:188px;top:119px"></i>
<i class="dt" style="left:192px;top:119px"></i>
<i class="dt" style="left:196px;top:119px"></i>
<i class="dt" style="left:200px;top:119px"></i>
<i class="dt" style="left:204px;top:119px"></i>
<i class="dt" style="left:208px;top:119px"></i>
<i class="dt" style="left:211px;top:119px"></i>
<i class="dt" style="left:215px;top:119px"></i>
<i class="dt" style="left:219px;top:119px"></i>
<i class="dt" style="left:223px;top:119px"></i>
<i class="dt" style="left:227px;top:119px"></i>
<i class="dt" style="left:231px;top:119px"></i>
<i class="dt" style="left:235px;top:119px"></i>
<i class="dt" style="left:239px;top:119px"></i>
<i class="dt" style="left:243px;top:119px"></i>
<i class="dt" style="left:247px;top:119px"></i>
<i class="dt" style="left:251px;top:119px"></i>
<i class="dt" style="left:255px;top:119px"></i>
<i class="dt" style="left:259px;top:119px"></i>
<i class="dt" style="left:263px;top:119px"></i>
<i class="dt" style="left:267px;top:119px"></i>
<i class="dt" style="left:271px;top:119px"></i>
<i class="dt" style="left:275px;top:119px"></i>
<i class="dt" style="left:279px;top:119px"></i>
<i class="dt" style="left:283px;top:119px"></i>
<i class="dt" style="left:287px;top:119px"></i>
<i class="dt" style="left:291px;top:119px"></i>
<i class="dt" style="left:295px;top:119px"></i>
<i class="dt" style="left:299px;top:119px"></i>
<i class="dt" style="left:303px;top:119px"></i>
<i class="dt" style="left:307px;top:119px"></i>
<i class="dt" style="left:311px;top:119px"></i>
<i class="dt" style="left:315px;top:119px"></i>
<i class="dt" style="left:319px;top:119px"></i>
<i class="dt" style="left:323px;top:119px"></i>
<i class="dt" style="left:327px;top:119px"></i>
<i class="dt" style="left:331px;top:119px"></i>
<i class="dt" style="left:335px;top:119px"></i>
<i class="dt" style="left:339px;top:119px"></i>
<i class="dt" style="left:342px;top:119px"></i>
<i class="dt" style="left:346px;top:119px"></i>
<i class="dt" style="left:350px;top:119px"></i>
<i class="dt" style="left:354px;top:119px"></i>
<i class="dt" style="left:358px;top:119px"></i>
<i class="dt" style="left:362px;top:119px"></i>
<i class="dt" style="left:366px;top:119px"></i>
<i class="dt" style="left:370px;top:119px"></i>
<i class="dt" style="left:374px;top:119px"></i>
<i class="dt" style="left:378px;top:119px"></i>
<div class="a pn" style="right:46.5px;top:113.40px;color:#161616">13</div>
<div class="a num" style="left:46.5px;top:132.65px;color:#161616">9</div>
<div class="a txt" style="left:54.599999999999994px;top:132.55px;color:#161616">市场监管、安全生产监管</div>
<i class="dt" style="left:139px;top:138px"></i>
<i class="dt" style="left:143px;top:138px"></i>
<i class="dt" style="left:147px;top:138px"></i>
<i class="dt" style="left:151px;top:138px"></i>
<i class="dt" style="left:155px;top:138px"></i>
<i class="dt" style="left:159px;top:138px"></i>
<i class="dt" style="left:163px;top:138px"></i>
<i class="dt" style="left:167px;top:138px"></i>
<i class="dt" style="left:171px;top:138px"></i>
<i class="dt" style="left:175px;top:138px"></i>
<i class="dt" style="left:179px;top:138px"></i>
<i class="dt" style="left:183px;top:138px"></i>
<i class="dt" style="left:187px;top:138px"></i>
<i class="dt" style="left:191px;top:138px"></i>
<i class="dt" style="left:195px;top:138px"></i>
<i class="dt" style="left:199px;top:138px"></i>
<i class="dt" style="left:203px;top:138px"></i>
<i class="dt" style="left:207px;top:138px"></i>
<i class="dt" style="left:211px;top:138px"></i>
<i class="dt" style="left:215px;top:138px"></i>
<i class="dt" style="left:219px;top:138px"></i>
<i class="dt" style="left:223px;top:138px"></i>
<i class="dt" style="left:227px;top:138px"></i>
<i class="dt" style="left:231px;top:138px"></i>
<i class="dt" style="left:235px;top:138px"></i>
<i class="dt" style="left:239px;top:138px"></i>
<i class="dt" style="left:243px;top:138px"></i>
<i class="dt" style="left:247px;top:138px"></i>
<i class="dt" style="left:251px;top:138px"></i>
<i class="dt" style="left:255px;top:138px"></i>
<i class="dt" style="left:259px;top:138px"></i>
<i class="dt" style="left:263px;top:138px"></i>
<i class="dt" style="left:267px;top:138px"></i>
<i class="dt" style="left:271px;top:138px"></i>
<i class="dt" style="left:275px;top:138px"></i>
<i class="dt" style="left:279px;top:138px"></i>
<i class="dt" style="left:283px;top:138px"></i>
<i class="dt" style="left:287px;top:138px"></i>
<i class="dt" style="left:290px;top:138px"></i>
<i class="dt" style="left:294px;top:138px"></i>
<i class="dt" style="left:298px;top:138px"></i>
<i class="dt" style="left:302px;top:138px"></i>
<i class="dt" style="left:306px;top:138px"></i>
<i class="dt" style="left:310px;top:138px"></i>
<i class="dt" style="left:314px;top:138px"></i>
<i class="dt" style="left:318px;top:138px"></i>
<i class="dt" style="left:322px;top:138px"></i>
<i class="dt" style="left:326px;top:138px"></i>
<i class="dt" style="left:330px;top:138px"></i>
<i class="dt" style="left:334px;top:138px"></i>
<i class="dt" style="left:338px;top:138px"></i>
<i class="dt" style="left:342px;top:138px"></i>
<i class="dt" style="left:346px;top:138px"></i>
<i class="dt" style="left:350px;top:138px"></i>
<i class="dt" style="left:354px;top:138px"></i>
<i class="dt" style="left:358px;top:138px"></i>
<i class="dt" style="left:362px;top:138px"></i>
<i class="dt" style="left:366px;top:138px"></i>
<i class="dt" style="left:370px;top:138px"></i>
<i class="dt" style="left:374px;top:138px"></i>
<i class="dt" style="left:378px;top:138px"></i>
<div class="a pn" style="right:46.5px;top:132.65px;color:#161616">15</div>
<div class="a num" style="left:46.5px;top:151.90px;color:#161616">10</div>
<div class="a txt" style="left:58.400000000000006px;top:151.80px;color:#161616">城乡建设、环境保护</div>
<i class="dt" style="left:128px;top:157px"></i>
<i class="dt" style="left:132px;top:157px"></i>
<i class="dt" style="left:136px;top:157px"></i>
<i class="dt" style="left:140px;top:157px"></i>
<i class="dt" style="left:144px;top:157px"></i>
<i class="dt" style="left:147px;top:157px"></i>
<i class="dt" style="left:151px;top:157px"></i>
<i class="dt" style="left:155px;top:157px"></i>
<i class="dt" style="left:159px;top:157px"></i>
<i class="dt" style="left:163px;top:157px"></i>
<i class="dt" style="left:167px;top:157px"></i>
<i class="dt" style="left:171px;top:157px"></i>
<i class="dt" style="left:175px;top:157px"></i>
<i class="dt" style="left:179px;top:157px"></i>
<i class="dt" style="left:183px;top:157px"></i>
<i class="dt" style="left:187px;top:157px"></i>
<i class="dt" style="left:191px;top:157px"></i>
<i class="dt" style="left:195px;top:157px"></i>
<i class="dt" style="left:199px;top:157px"></i>
<i class="dt" style="left:203px;top:157px"></i>
<i class="dt" style="left:207px;top:157px"></i>
<i class="dt" style="left:211px;top:157px"></i>
<i class="dt" style="left:215px;top:157px"></i>
<i class="dt" style="left:219px;top:157px"></i>
<i class="dt" style="left:223px;top:157px"></i>
<i class="dt" style="left:227px;top:157px"></i>
<i class="dt" style="left:231px;top:157px"></i>
<i class="dt" style="left:235px;top:157px"></i>
<i class="dt" style="left:239px;top:157px"></i>
<i class="dt" style="left:243px;top:157px"></i>
<i class="dt" style="left:247px;top:157px"></i>
<i class="dt" style="left:251px;top:157px"></i>
<i class="dt" style="left:255px;top:157px"></i>
<i class="dt" style="left:259px;top:157px"></i>
<i class="dt" style="left:263px;top:157px"></i>
<i class="dt" style="left:267px;top:157px"></i>
<i class="dt" style="left:271px;top:157px"></i>
<i class="dt" style="left:275px;top:157px"></i>
<i class="dt" style="left:279px;top:157px"></i>
<i class="dt" style="left:283px;top:157px"></i>
<i class="dt" style="left:287px;top:157px"></i>
<i class="dt" style="left:291px;top:157px"></i>
<i class="dt" style="left:295px;top:157px"></i>
<i class="dt" style="left:299px;top:157px"></i>
<i class="dt" style="left:303px;top:157px"></i>
<i class="dt" style="left:307px;top:157px"></i>
<i class="dt" style="left:311px;top:157px"></i>
<i class="dt" style="left:315px;top:157px"></i>
<i class="dt" style="left:319px;top:157px"></i>
<i class="dt" style="left:323px;top:157px"></i>
<i class="dt" style="left:326px;top:157px"></i>
<i class="dt" style="left:330px;top:157px"></i>
<i class="dt" style="left:334px;top:157px"></i>
<i class="dt" style="left:338px;top:157px"></i>
<i class="dt" style="left:342px;top:157px"></i>
<i class="dt" style="left:346px;top:157px"></i>
<i class="dt" style="left:350px;top:157px"></i>
<i class="dt" style="left:354px;top:157px"></i>
<i class="dt" style="left:358px;top:157px"></i>
<i class="dt" style="left:362px;top:157px"></i>
<i class="dt" style="left:366px;top:157px"></i>
<i class="dt" style="left:370px;top:157px"></i>
<i class="dt" style="left:374px;top:157px"></i>
<i class="dt" style="left:378px;top:157px"></i>
<div class="a pn" style="right:46.5px;top:151.90px;color:#161616">16</div>
<div class="a num" style="left:46.5px;top:171.15px;color:#161616">11</div>
<div class="a txt" style="left:58.400000000000006px;top:171.05px;color:#161616">科技、教育</div>
<i class="dt" style="left:97px;top:176px"></i>
<i class="dt" style="left:101px;top:176px"></i>
<i class="dt" style="left:105px;top:176px"></i>
<i class="dt" style="left:109px;top:176px"></i>
<i class="dt" style="left:113px;top:176px"></i>
<i class="dt" style="left:117px;top:176px"></i>
<i class="dt" style="left:121px;top:176px"></i>
<i class="dt" style="left:125px;top:176px"></i>
<i class="dt" style="left:129px;top:176px"></i>
<i class="dt" style="left:133px;top:176px"></i>
<i class="dt" style="left:137px;top:176px"></i>
<i class="dt" style="left:141px;top:176px"></i>
<i class="dt" style="left:145px;top:176px"></i>
<i class="dt" style="left:149px;top:176px"></i>
<i class="dt" style="left:153px;top:176px"></i>
<i class="dt" style="left:157px;top:176px"></i>
<i class="dt" style="left:161px;top:176px"></i>
<i class="dt" style="left:165px;top:176px"></i>
<i class="dt" style="left:169px;top:176px"></i>
<i class="dt" style="left:173px;top:176px"></i>
<i class="dt" style="left:177px;top:176px"></i>
<i class="dt" style="left:182px;top:176px"></i>
<i class="dt" style="left:186px;top:176px"></i>
<i class="dt" style="left:190px;top:176px"></i>
<i class="dt" style="left:194px;top:176px"></i>
<i class="dt" style="left:198px;top:176px"></i>
<i class="dt" style="left:202px;top:176px"></i>
<i class="dt" style="left:206px;top:176px"></i>
<i class="dt" style="left:210px;top:176px"></i>
<i class="dt" style="left:214px;top:176px"></i>
<i class="dt" style="left:218px;top:176px"></i>
<i class="dt" style="left:222px;top:176px"></i>
<i class="dt" style="left:226px;top:176px"></i>
<i class="dt" style="left:230px;top:176px"></i>
<i class="dt" style="left:234px;top:176px"></i>
<i class="dt" style="left:238px;top:176px"></i>
<i class="dt" style="left:242px;top:176px"></i>
<i class="dt" style="left:246px;top:176px"></i>
<i class="dt" style="left:250px;top:176px"></i>
<i class="dt" style="left:254px;top:176px"></i>
<i class="dt" style="left:258px;top:176px"></i>
<i class="dt" style="left:262px;top:176px"></i>
<i class="dt" style="left:266px;top:176px"></i>
<i class="dt" style="left:270px;top:176px"></i>
<i class="dt" style="left:274px;top:176px"></i>
<i class="dt" style="left:278px;top:176px"></i>
<i class="dt" style="left:282px;top:176px"></i>
<i class="dt" style="left:286px;top:176px"></i>
<i class="dt" style="left:290px;top:176px"></i>
<i class="dt" style="left:294px;top:176px"></i>
<i class="dt" style="left:298px;top:176px"></i>
<i class="dt" style="left:302px;top:176px"></i>
<i class="dt" style="left:306px;top:176px"></i>
<i class="dt" style="left:310px;top:176px"></i>
<i class="dt" style="left:314px;top:176px"></i>
<i class="dt" style="left:318px;top:176px"></i>
<i class="dt" style="left:322px;top:176px"></i>
<i class="dt" style="left:326px;top:176px"></i>
<i class="dt" style="left:330px;top:176px"></i>
<i class="dt" style="left:334px;top:176px"></i>
<i class="dt" style="left:338px;top:176px"></i>
<i class="dt" style="left:342px;top:176px"></i>
<i class="dt" style="left:346px;top:176px"></i>
<i class="dt" style="left:350px;top:176px"></i>
<i class="dt" style="left:354px;top:176px"></i>
<i class="dt" style="left:358px;top:176px"></i>
<i class="dt" style="left:362px;top:176px"></i>
<i class="dt" style="left:366px;top:176px"></i>
<i class="dt" style="left:370px;top:176px"></i>
<i class="dt" style="left:374px;top:176px"></i>
<i class="dt" style="left:378px;top:176px"></i>
<div class="a pn" style="right:46.5px;top:171.15px;color:#161616">17</div>
<div class="a num" style="left:46.5px;top:190.40px;color:#161616">12</div>
<div class="a txt" style="left:58.400000000000006px;top:190.30px;color:#161616">文化、广电、新闻出版</div>
<i class="dt" style="left:135px;top:196px"></i>
<i class="dt" style="left:139px;top:196px"></i>
<i class="dt" style="left:143px;top:196px"></i>
<i class="dt" style="left:147px;top:196px"></i>
<i class="dt" style="left:151px;top:196px"></i>
<i class="dt" style="left:155px;top:196px"></i>
<i class="dt" style="left:159px;top:196px"></i>
<i class="dt" style="left:163px;top:196px"></i>
<i class="dt" style="left:167px;top:196px"></i>
<i class="dt" style="left:171px;top:196px"></i>
<i class="dt" style="left:175px;top:196px"></i>
<i class="dt" style="left:179px;top:196px"></i>
<i class="dt" style="left:183px;top:196px"></i>
<i class="dt" style="left:187px;top:196px"></i>
<i class="dt" style="left:191px;top:196px"></i>
<i class="dt" style="left:195px;top:196px"></i>
<i class="dt" style="left:199px;top:196px"></i>
<i class="dt" style="left:203px;top:196px"></i>
<i class="dt" style="left:207px;top:196px"></i>
<i class="dt" style="left:211px;top:196px"></i>
<i class="dt" style="left:215px;top:196px"></i>
<i class="dt" style="left:219px;top:196px"></i>
<i class="dt" style="left:223px;top:196px"></i>
<i class="dt" style="left:227px;top:196px"></i>
<i class="dt" style="left:231px;top:196px"></i>
<i class="dt" style="left:235px;top:196px"></i>
<i class="dt" style="left:239px;top:196px"></i>
<i class="dt" style="left:243px;top:196px"></i>
<i class="dt" style="left:247px;top:196px"></i>
<i class="dt" style="left:251px;top:196px"></i>
<i class="dt" style="left:255px;top:196px"></i>
<i class="dt" style="left:259px;top:196px"></i>
<i class="dt" style="left:263px;top:196px"></i>
<i class="dt" style="left:267px;top:196px"></i>
<i class="dt" style="left:271px;top:196px"></i>
<i class="dt" style="left:275px;top:196px"></i>
<i class="dt" style="left:279px;top:196px"></i>
<i class="dt" style="left:283px;top:196px"></i>
<i class="dt" style="left:287px;top:196px"></i>
<i class="dt" style="left:291px;top:196px"></i>
<i class="dt" style="left:295px;top:196px"></i>
<i class="dt" style="left:299px;top:196px"></i>
<i class="dt" style="left:303px;top:196px"></i>
<i class="dt" style="left:306px;top:196px"></i>
<i class="dt" style="left:310px;top:196px"></i>
<i class="dt" style="left:314px;top:196px"></i>
<i class="dt" style="left:318px;top:196px"></i>
<i class="dt" style="left:322px;top:196px"></i>
<i class="dt" style="left:326px;top:196px"></i>
<i class="dt" style="left:330px;top:196px"></i>
<i class="dt" style="left:334px;top:196px"></i>
<i class="dt" style="left:338px;top:196px"></i>
<i class="dt" style="left:342px;top:196px"></i>
<i class="dt" style="left:346px;top:196px"></i>
<i class="dt" style="left:350px;top:196px"></i>
<i class="dt" style="left:354px;top:196px"></i>
<i class="dt" style="left:358px;top:196px"></i>
<i class="dt" style="left:362px;top:196px"></i>
<i class="dt" style="left:366px;top:196px"></i>
<i class="dt" style="left:370px;top:196px"></i>
<i class="dt" style="left:374px;top:196px"></i>
<i class="dt" style="left:378px;top:196px"></i>
<div class="a pn" style="right:46.5px;top:190.40px;color:#161616">19</div>
<div class="a num" style="left:46.5px;top:209.65px;color:#161616">13</div>
<div class="a txt" style="left:58.400000000000006px;top:209.55px;color:#161616">卫生、体育</div>
<i class="dt" style="left:97px;top:215px"></i>
<i class="dt" style="left:101px;top:215px"></i>
<i class="dt" style="left:105px;top:215px"></i>
<i class="dt" style="left:109px;top:215px"></i>
<i class="dt" style="left:113px;top:215px"></i>
<i class="dt" style="left:117px;top:215px"></i>
<i class="dt" style="left:121px;top:215px"></i>
<i class="dt" style="left:125px;top:215px"></i>
<i class="dt" style="left:129px;top:215px"></i>
<i class="dt" style="left:133px;top:215px"></i>
<i class="dt" style="left:137px;top:215px"></i>
<i class="dt" style="left:141px;top:215px"></i>
<i class="dt" style="left:145px;top:215px"></i>
<i class="dt" style="left:149px;top:215px"></i>
<i class="dt" style="left:153px;top:215px"></i>
<i class="dt" style="left:157px;top:215px"></i>
<i class="dt" style="left:161px;top:215px"></i>
<i class="dt" style="left:165px;top:215px"></i>
<i class="dt" style="left:169px;top:215px"></i>
<i class="dt" style="left:173px;top:215px"></i>
<i class="dt" style="left:177px;top:215px"></i>
<i class="dt" style="left:182px;top:215px"></i>
<i class="dt" style="left:186px;top:215px"></i>
<i class="dt" style="left:190px;top:215px"></i>
<i class="dt" style="left:194px;top:215px"></i>
<i class="dt" style="left:198px;top:215px"></i>
<i class="dt" style="left:202px;top:215px"></i>
<i class="dt" style="left:206px;top:215px"></i>
<i class="dt" style="left:210px;top:215px"></i>
<i class="dt" style="left:214px;top:215px"></i>
<i class="dt" style="left:218px;top:215px"></i>
<i class="dt" style="left:222px;top:215px"></i>
<i class="dt" style="left:226px;top:215px"></i>
<i class="dt" style="left:230px;top:215px"></i>
<i class="dt" style="left:234px;top:215px"></i>
<i class="dt" style="left:238px;top:215px"></i>
<i class="dt" style="left:242px;top:215px"></i>
<i class="dt" style="left:246px;top:215px"></i>
<i class="dt" style="left:250px;top:215px"></i>
<i class="dt" style="left:254px;top:215px"></i>
<i class="dt" style="left:258px;top:215px"></i>
<i class="dt" style="left:262px;top:215px"></i>
<i class="dt" style="left:266px;top:215px"></i>
<i class="dt" style="left:270px;top:215px"></i>
<i class="dt" style="left:274px;top:215px"></i>
<i class="dt" style="left:278px;top:215px"></i>
<i class="dt" style="left:282px;top:215px"></i>
<i class="dt" style="left:286px;top:215px"></i>
<i class="dt" style="left:290px;top:215px"></i>
<i class="dt" style="left:294px;top:215px"></i>
<i class="dt" style="left:298px;top:215px"></i>
<i class="dt" style="left:302px;top:215px"></i>
<i class="dt" style="left:306px;top:215px"></i>
<i class="dt" style="left:310px;top:215px"></i>
<i class="dt" style="left:314px;top:215px"></i>
<i class="dt" style="left:318px;top:215px"></i>
<i class="dt" style="left:322px;top:215px"></i>
<i class="dt" style="left:326px;top:215px"></i>
<i class="dt" style="left:330px;top:215px"></i>
<i class="dt" style="left:334px;top:215px"></i>
<i class="dt" style="left:338px;top:215px"></i>
<i class="dt" style="left:342px;top:215px"></i>
<i class="dt" style="left:346px;top:215px"></i>
<i class="dt" style="left:350px;top:215px"></i>
<i class="dt" style="left:354px;top:215px"></i>
<i class="dt" style="left:358px;top:215px"></i>
<i class="dt" style="left:362px;top:215px"></i>
<i class="dt" style="left:366px;top:215px"></i>
<i class="dt" style="left:370px;top:215px"></i>
<i class="dt" style="left:374px;top:215px"></i>
<i class="dt" style="left:378px;top:215px"></i>
<div class="a pn" style="right:46.5px;top:209.65px;color:#161616">20</div>
<div class="a num" style="left:46.5px;top:228.90px;color:#161616">14</div>
<div class="a txt" style="left:58.400000000000006px;top:228.80px;color:#161616">人口与计划生育、妇女儿童工作</div>
<i class="dt" style="left:166px;top:234px"></i>
<i class="dt" style="left:170px;top:234px"></i>
<i class="dt" style="left:174px;top:234px"></i>
<i class="dt" style="left:178px;top:234px"></i>
<i class="dt" style="left:182px;top:234px"></i>
<i class="dt" style="left:186px;top:234px"></i>
<i class="dt" style="left:190px;top:234px"></i>
<i class="dt" style="left:194px;top:234px"></i>
<i class="dt" style="left:198px;top:234px"></i>
<i class="dt" style="left:202px;top:234px"></i>
<i class="dt" style="left:206px;top:234px"></i>
<i class="dt" style="left:210px;top:234px"></i>
<i class="dt" style="left:214px;top:234px"></i>
<i class="dt" style="left:218px;top:234px"></i>
<i class="dt" style="left:222px;top:234px"></i>
<i class="dt" style="left:226px;top:234px"></i>
<i class="dt" style="left:230px;top:234px"></i>
<i class="dt" style="left:234px;top:234px"></i>
<i class="dt" style="left:238px;top:234px"></i>
<i class="dt" style="left:242px;top:234px"></i>
<i class="dt" style="left:246px;top:234px"></i>
<i class="dt" style="left:250px;top:234px"></i>
<i class="dt" style="left:254px;top:234px"></i>
<i class="dt" style="left:258px;top:234px"></i>
<i class="dt" style="left:262px;top:234px"></i>
<i class="dt" style="left:266px;top:234px"></i>
<i class="dt" style="left:270px;top:234px"></i>
<i class="dt" style="left:274px;top:234px"></i>
<i class="dt" style="left:278px;top:234px"></i>
<i class="dt" style="left:282px;top:234px"></i>
<i class="dt" style="left:286px;top:234px"></i>
<i class="dt" style="left:290px;top:234px"></i>
<i class="dt" style="left:294px;top:234px"></i>
<i class="dt" style="left:298px;top:234px"></i>
<i class="dt" style="left:302px;top:234px"></i>
<i class="dt" style="left:306px;top:234px"></i>
<i class="dt" style="left:310px;top:234px"></i>
<i class="dt" style="left:314px;top:234px"></i>
<i class="dt" style="left:318px;top:234px"></i>
<i class="dt" style="left:322px;top:234px"></i>
<i class="dt" style="left:326px;top:234px"></i>
<i class="dt" style="left:330px;top:234px"></i>
<i class="dt" style="left:334px;top:234px"></i>
<i class="dt" style="left:338px;top:234px"></i>
<i class="dt" style="left:342px;top:234px"></i>
<i class="dt" style="left:346px;top:234px"></i>
<i class="dt" style="left:350px;top:234px"></i>
<i class="dt" style="left:354px;top:234px"></i>
<i class="dt" style="left:358px;top:234px"></i>
<i class="dt" style="left:362px;top:234px"></i>
<i class="dt" style="left:366px;top:234px"></i>
<i class="dt" style="left:370px;top:234px"></i>
<i class="dt" style="left:374px;top:234px"></i>
<i class="dt" style="left:378px;top:234px"></i>
<div class="a pn" style="right:46.5px;top:228.90px;color:#161616">24</div>
<div class="a num" style="left:46.5px;top:248.15px;color:#161616">15</div>
<div class="a txt" style="left:58.400000000000006px;top:248.05px;color:#161616">劳动、人事、监察</div>
<i class="dt" style="left:120px;top:253px"></i>
<i class="dt" style="left:124px;top:253px"></i>
<i class="dt" style="left:128px;top:253px"></i>
<i class="dt" style="left:132px;top:253px"></i>
<i class="dt" style="left:136px;top:253px"></i>
<i class="dt" style="left:140px;top:253px"></i>
<i class="dt" style="left:144px;top:253px"></i>
<i class="dt" style="left:148px;top:253px"></i>
<i class="dt" style="left:152px;top:253px"></i>
<i class="dt" style="left:156px;top:253px"></i>
<i class="dt" style="left:160px;top:253px"></i>
<i class="dt" style="left:164px;top:253px"></i>
<i class="dt" style="left:168px;top:253px"></i>
<i class="dt" style="left:172px;top:253px"></i>
<i class="dt" style="left:176px;top:253px"></i>
<i class="dt" style="left:180px;top:253px"></i>
<i class="dt" style="left:184px;top:253px"></i>
<i class="dt" style="left:188px;top:253px"></i>
<i class="dt" style="left:192px;top:253px"></i>
<i class="dt" style="left:195px;top:253px"></i>
<i class="dt" style="left:199px;top:253px"></i>
<i class="dt" style="left:203px;top:253px"></i>
<i class="dt" style="left:207px;top:253px"></i>
<i class="dt" style="left:211px;top:253px"></i>
<i class="dt" style="left:215px;top:253px"></i>
<i class="dt" style="left:219px;top:253px"></i>
<i class="dt" style="left:223px;top:253px"></i>
<i class="dt" style="left:227px;top:253px"></i>
<i class="dt" style="left:231px;top:253px"></i>
<i class="dt" style="left:235px;top:253px"></i>
<i class="dt" style="left:239px;top:253px"></i>
<i class="dt" style="left:243px;top:253px"></i>
<i class="dt" style="left:247px;top:253px"></i>
<i class="dt" style="left:251px;top:253px"></i>
<i class="dt" style="left:255px;top:253px"></i>
<i class="dt" style="left:259px;top:253px"></i>
<i class="dt" style="left:263px;top:253px"></i>
<i class="dt" style="left:267px;top:253px"></i>
<i class="dt" style="left:271px;top:253px"></i>
<i class="dt" style="left:275px;top:253px"></i>
<i class="dt" style="left:279px;top:253px"></i>
<i class="dt" style="left:283px;top:253px"></i>
<i class="dt" style="left:287px;top:253px"></i>
<i class="dt" style="left:291px;top:253px"></i>
<i class="dt" style="left:295px;top:253px"></i>
<i class="dt" style="left:299px;top:253px"></i>
<i class="dt" style="left:303px;top:253px"></i>
<i class="dt" style="left:307px;top:253px"></i>
<i class="dt" style="left:311px;top:253px"></i>
<i class="dt" style="left:315px;top:253px"></i>
<i class="dt" style="left:319px;top:253px"></i>
<i class="dt" style="left:323px;top:253px"></i>
<i class="dt" style="left:327px;top:253px"></i>
<i class="dt" style="left:331px;top:253px"></i>
<i class="dt" style="left:335px;top:253px"></i>
<i class="dt" style="left:338px;top:253px"></i>
<i class="dt" style="left:342px;top:253px"></i>
<i class="dt" style="left:346px;top:253px"></i>
<i class="dt" style="left:350px;top:253px"></i>
<i class="dt" style="left:354px;top:253px"></i>
<i class="dt" style="left:358px;top:253px"></i>
<i class="dt" style="left:362px;top:253px"></i>
<i class="dt" style="left:366px;top:253px"></i>
<i class="dt" style="left:370px;top:253px"></i>
<i class="dt" style="left:374px;top:253px"></i>
<i class="dt" style="left:378px;top:253px"></i>
<div class="a pn" style="right:46.5px;top:248.15px;color:#161616">25</div>
<div class="a num" style="left:46.5px;top:267.40px;color:#161616">16</div>
<div class="a txt" style="left:58.400000000000006px;top:267.30px;color:#161616">公安、安全、司法</div>
<i class="dt" style="left:120px;top:273px"></i>
<i class="dt" style="left:124px;top:273px"></i>
<i class="dt" style="left:128px;top:273px"></i>
<i class="dt" style="left:132px;top:273px"></i>
<i class="dt" style="left:136px;top:273px"></i>
<i class="dt" style="left:140px;top:273px"></i>
<i class="dt" style="left:144px;top:273px"></i>
<i class="dt" style="left:148px;top:273px"></i>
<i class="dt" style="left:152px;top:273px"></i>
<i class="dt" style="left:156px;top:273px"></i>
<i class="dt" style="left:160px;top:273px"></i>
<i class="dt" style="left:164px;top:273px"></i>
<i class="dt" style="left:168px;top:273px"></i>
<i class="dt" style="left:172px;top:273px"></i>
<i class="dt" style="left:176px;top:273px"></i>
<i class="dt" style="left:180px;top:273px"></i>
<i class="dt" style="left:184px;top:273px"></i>
<i class="dt" style="left:188px;top:273px"></i>
<i class="dt" style="left:192px;top:273px"></i>
<i class="dt" style="left:195px;top:273px"></i>
<i class="dt" style="left:199px;top:273px"></i>
<i class="dt" style="left:203px;top:273px"></i>
<i class="dt" style="left:207px;top:273px"></i>
<i class="dt" style="left:211px;top:273px"></i>
<i class="dt" style="left:215px;top:273px"></i>
<i class="dt" style="left:219px;top:273px"></i>
<i class="dt" style="left:223px;top:273px"></i>
<i class="dt" style="left:227px;top:273px"></i>
<i class="dt" style="left:231px;top:273px"></i>
<i class="dt" style="left:235px;top:273px"></i>
<i class="dt" style="left:239px;top:273px"></i>
<i class="dt" style="left:243px;top:273px"></i>
<i class="dt" style="left:247px;top:273px"></i>
<i class="dt" style="left:251px;top:273px"></i>
<i class="dt" style="left:255px;top:273px"></i>
<i class="dt" style="left:259px;top:273px"></i>
<i class="dt" style="left:263px;top:273px"></i>
<i class="dt" style="left:267px;top:273px"></i>
<i class="dt" style="left:271px;top:273px"></i>
<i class="dt" style="left:275px;top:273px"></i>
<i class="dt" style="left:279px;top:273px"></i>
<i class="dt" style="left:283px;top:273px"></i>
<i class="dt" style="left:287px;top:273px"></i>
<i class="dt" style="left:291px;top:273px"></i>
<i class="dt" style="left:295px;top:273px"></i>
<i class="dt" style="left:299px;top:273px"></i>
<i class="dt" style="left:303px;top:273px"></i>
<i class="dt" style="left:307px;top:273px"></i>
<i class="dt" style="left:311px;top:273px"></i>
<i class="dt" style="left:315px;top:273px"></i>
<i class="dt" style="left:319px;top:273px"></i>
<i class="dt" style="left:323px;top:273px"></i>
<i class="dt" style="left:327px;top:273px"></i>
<i class="dt" style="left:331px;top:273px"></i>
<i class="dt" style="left:335px;top:273px"></i>
<i class="dt" style="left:338px;top:273px"></i>
<i class="dt" style="left:342px;top:273px"></i>
<i class="dt" style="left:346px;top:273px"></i>
<i class="dt" style="left:350px;top:273px"></i>
<i class="dt" style="left:354px;top:273px"></i>
<i class="dt" style="left:358px;top:273px"></i>
<i class="dt" style="left:362px;top:273px"></i>
<i class="dt" style="left:366px;top:273px"></i>
<i class="dt" style="left:370px;top:273px"></i>
<i class="dt" style="left:374px;top:273px"></i>
<i class="dt" style="left:378px;top:273px"></i>
<div class="a pn" style="right:46.5px;top:267.40px;color:#161616">26</div>
<div class="a num" style="left:46.5px;top:286.65px;color:#161616">17</div>
<div class="a txt" style="left:58.400000000000006px;top:286.55px;color:#161616">民政、扶贫、救灾</div>
<i class="dt" style="left:120px;top:292px"></i>
<i class="dt" style="left:124px;top:292px"></i>
<i class="dt" style="left:128px;top:292px"></i>
<i class="dt" style="left:132px;top:292px"></i>
<i class="dt" style="left:136px;top:292px"></i>
<i class="dt" style="left:140px;top:292px"></i>
<i class="dt" style="left:144px;top:292px"></i>
<i class="dt" style="left:148px;top:292px"></i>
<i class="dt" style="left:152px;top:292px"></i>
<i class="dt" style="left:156px;top:292px"></i>
<i class="dt" style="left:160px;top:292px"></i>
<i class="dt" style="left:164px;top:292px"></i>
<i class="dt" style="left:168px;top:292px"></i>
<i class="dt" style="left:172px;top:292px"></i>
<i class="dt" style="left:176px;top:292px"></i>
<i class="dt" style="left:180px;top:292px"></i>
<i class="dt" style="left:184px;top:292px"></i>
<i class="dt" style="left:188px;top:292px"></i>
<i class="dt" style="left:192px;top:292px"></i>
<i class="dt" style="left:195px;top:292px"></i>
<i class="dt" style="left:199px;top:292px"></i>
<i class="dt" style="left:203px;top:292px"></i>
<i class="dt" style="left:207px;top:292px"></i>
<i class="dt" style="left:211px;top:292px"></i>
<i class="dt" style="left:215px;top:292px"></i>
<i class="dt" style="left:219px;top:292px"></i>
<i class="dt" style="left:223px;top:292px"></i>
<i class="dt" style="left:227px;top:292px"></i>
<i class="dt" style="left:231px;top:292px"></i>
<i class="dt" style="left:235px;top:292px"></i>
<i class="dt" style="left:239px;top:292px"></i>
<i class="dt" style="left:243px;top:292px"></i>
<i class="dt" style="left:247px;top:292px"></i>
<i class="dt" style="left:251px;top:292px"></i>
<i class="dt" style="left:255px;top:292px"></i>
<i class="dt" style="left:259px;top:292px"></i>
<i class="dt" style="left:263px;top:292px"></i>
<i class="dt" style="left:267px;top:292px"></i>
<i class="dt" style="left:271px;top:292px"></i>
<i class="dt" style="left:275px;top:292px"></i>
<i class="dt" style="left:279px;top:292px"></i>
<i class="dt" style="left:283px;top:292px"></i>
<i class="dt" style="left:287px;top:292px"></i>
<i class="dt" style="left:291px;top:292px"></i>
<i class="dt" style="left:295px;top:292px"></i>
<i class="dt" style="left:299px;top:292px"></i>
<i class="dt" style="left:303px;top:292px"></i>
<i class="dt" style="left:307px;top:292px"></i>
<i class="dt" style="left:311px;top:292px"></i>
<i class="dt" style="left:315px;top:292px"></i>
<i class="dt" style="left:319px;top:292px"></i>
<i class="dt" style="left:323px;top:292px"></i>
<i class="dt" style="left:327px;top:292px"></i>
<i class="dt" style="left:331px;top:292px"></i>
<i class="dt" style="left:335px;top:292px"></i>
<i class="dt" style="left:338px;top:292px"></i>
<i class="dt" style="left:342px;top:292px"></i>
<i class="dt" style="left:346px;top:292px"></i>
<i class="dt" style="left:350px;top:292px"></i>
<i class="dt" style="left:354px;top:292px"></i>
<i class="dt" style="left:358px;top:292px"></i>
<i class="dt" style="left:362px;top:292px"></i>
<i class="dt" style="left:366px;top:292px"></i>
<i class="dt" style="left:370px;top:292px"></i>
<i class="dt" style="left:374px;top:292px"></i>
<i class="dt" style="left:378px;top:292px"></i>
<div class="a pn" style="right:46.5px;top:286.65px;color:#161616">27</div>
<div class="a num" style="left:46.5px;top:305.90px;color:#161616">18</div>
<div class="a txt" style="left:58.400000000000006px;top:305.80px;color:#161616">民族、宗教</div>
<i class="dt" style="left:97px;top:311px"></i>
<i class="dt" style="left:101px;top:311px"></i>
<i class="dt" style="left:105px;top:311px"></i>
<i class="dt" style="left:109px;top:311px"></i>
<i class="dt" style="left:113px;top:311px"></i>
<i class="dt" style="left:117px;top:311px"></i>
<i class="dt" style="left:121px;top:311px"></i>
<i class="dt" style="left:125px;top:311px"></i>
<i class="dt" style="left:129px;top:311px"></i>
<i class="dt" style="left:133px;top:311px"></i>
<i class="dt" style="left:137px;top:311px"></i>
<i class="dt" style="left:141px;top:311px"></i>
<i class="dt" style="left:145px;top:311px"></i>
<i class="dt" style="left:149px;top:311px"></i>
<i class="dt" style="left:153px;top:311px"></i>
<i class="dt" style="left:157px;top:311px"></i>
<i class="dt" style="left:161px;top:311px"></i>
<i class="dt" style="left:165px;top:311px"></i>
<i class="dt" style="left:169px;top:311px"></i>
<i class="dt" style="left:173px;top:311px"></i>
<i class="dt" style="left:177px;top:311px"></i>
<i class="dt" style="left:182px;top:311px"></i>
<i class="dt" style="left:186px;top:311px"></i>
<i class="dt" style="left:190px;top:311px"></i>
<i class="dt" style="left:194px;top:311px"></i>
<i class="dt" style="left:198px;top:311px"></i>
<i class="dt" style="left:202px;top:311px"></i>
<i class="dt" style="left:206px;top:311px"></i>
<i class="dt" style="left:210px;top:311px"></i>
<i class="dt" style="left:214px;top:311px"></i>
<i class="dt" style="left:218px;top:311px"></i>
<i class="dt" style="left:222px;top:311px"></i>
<i class="dt" style="left:226px;top:311px"></i>
<i class="dt" style="left:230px;top:311px"></i>
<i class="dt" style="left:234px;top:311px"></i>
<i class="dt" style="left:238px;top:311px"></i>
<i class="dt" style="left:242px;top:311px"></i>
<i class="dt" style="left:246px;top:311px"></i>
<i class="dt" style="left:250px;top:311px"></i>
<i class="dt" style="left:254px;top:311px"></i>
<i class="dt" style="left:258px;top:311px"></i>
<i class="dt" style="left:262px;top:311px"></i>
<i class="dt" style="left:266px;top:311px"></i>
<i class="dt" style="left:270px;top:311px"></i>
<i class="dt" style="left:274px;top:311px"></i>
<i class="dt" style="left:278px;top:311px"></i>
<i class="dt" style="left:282px;top:311px"></i>
<i class="dt" style="left:286px;top:311px"></i>
<i class="dt" style="left:290px;top:311px"></i>
<i class="dt" style="left:294px;top:311px"></i>
<i class="dt" style="left:298px;top:311px"></i>
<i class="dt" style="left:302px;top:311px"></i>
<i class="dt" style="left:306px;top:311px"></i>
<i class="dt" style="left:310px;top:311px"></i>
<i class="dt" style="left:314px;top:311px"></i>
<i class="dt" style="left:318px;top:311px"></i>
<i class="dt" style="left:322px;top:311px"></i>
<i class="dt" style="left:326px;top:311px"></i>
<i class="dt" style="left:330px;top:311px"></i>
<i class="dt" style="left:334px;top:311px"></i>
<i class="dt" style="left:338px;top:311px"></i>
<i class="dt" style="left:342px;top:311px"></i>
<i class="dt" style="left:346px;top:311px"></i>
<i class="dt" style="left:350px;top:311px"></i>
<i class="dt" style="left:354px;top:311px"></i>
<i class="dt" style="left:358px;top:311px"></i>
<i class="dt" style="left:362px;top:311px"></i>
<i class="dt" style="left:366px;top:311px"></i>
<i class="dt" style="left:370px;top:311px"></i>
<i class="dt" style="left:374px;top:311px"></i>
<i class="dt" style="left:378px;top:311px"></i>
<div class="a pn" style="right:46.5px;top:305.90px;color:#161616">28</div>
</div></div>

<div id="sel"><svg style="left:0;top:0" width="743" height="508" viewBox="0 0 743 508">
<path d="M105 237.5 H306 M105 249.5 H306" stroke="#14148a" stroke-width="1" stroke-dasharray="1 2"/>
<g fill="none" stroke="#0000c0" stroke-width="1.3">
<rect x="99.6" y="235.6" width="5" height="5"/><rect x="99.6" y="241" width="5" height="5"/><rect x="99.6" y="246.6" width="5" height="5"/>
<rect x="202.4" y="235.6" width="5" height="5"/><rect x="202.4" y="246.6" width="5" height="5"/>
<rect x="306.6" y="235.6" width="5" height="5"/><rect x="306.6" y="241" width="5" height="5"/><rect x="306.6" y="246.6" width="5" height="5"/>
</g>
<g fill="#202060">
<rect x="101.6" y="237.6" width="1" height="1"/><rect x="101.6" y="243" width="1" height="1"/><rect x="101.6" y="248.6" width="1" height="1"/>
<rect x="204.4" y="237.6" width="1" height="1"/><rect x="204.4" y="248.6" width="1" height="1"/>
<rect x="308.6" y="237.6" width="1" height="1"/><rect x="308.6" y="243" width="1" height="1"/><rect x="308.6" y="248.6" width="1" height="1"/>
</g>
</svg>
</div>
<!-- RIGHT PANEL -->
<div class="a" style="left:38px;top:165px;width:470px;height:1px;background:#2a2a2a"></div>
<div id="panel"><!-- doc scrollbar -->
<div class="a" style="left:508px;top:165px;width:15px;height:308px;background:#3a3a3a"></div>
<div class="a" style="left:509px;top:166px;width:13px;height:13px;background:#585858;border:1px solid #656565"></div>
<div class="a" style="left:509px;top:189px;width:13px;height:26px;background:#505050;border:1px solid #5c5c5c"></div>
<div class="a" style="left:509px;top:459px;width:13px;height:13px;background:#585858;border:1px solid #656565"></div>
<!-- splitter -->
<div class="a" style="left:523px;top:165px;width:3px;height:308px;background:#3c3c3c"></div>
<div class="a" style="left:526px;top:165px;width:1px;height:308px;background:#2c2c2c"></div>
<!-- outer frame -->
<div class="a" style="left:527px;top:165px;width:184px;height:307px;background:#464646;border:1px solid #555"></div>
<!-- header -->
<div class="a" style="left:531px;top:169px;width:177px;height:20px;background:#3b3b3b"></div>
<div class="a" style="left:531px;top:171px;width:177px;text-align:center;font-size:13px;font-weight:bold;color:#fafafa">文字</div>
<!-- list -->
<div class="a" style="left:531px;top:195px;width:177px;height:274px;background:#353535;border:1px solid #2c2c2c"></div>
<div class="a" style="left:552px;top:201px;font-size:12px;color:#f2f2f2">几何</div>
<div class="a" style="left:552px;top:224px;font-size:12px;color:#f2f2f2">字体</div>
<!-- group box 1 -->
<div class="a" style="left:542px;top:269px;width:160px;height:199px;border:1px solid #454545;border-right:none;border-bottom:none;border-radius:3px 0 0 0"></div>
<div class="a" style="left:552px;top:284px;font-size:12px;color:#f2f2f2">字体</div>
<div class="a" style="left:586px;top:280px;width:108px;height:21px;background:#272727;border-radius:2px"></div>
<div class="a" style="left:589px;top:285px;font-family:'Liberation Mono',monospace;font-size:11.5px;letter-spacing:-0.9px;color:#f6f6f6;white-space:nowrap">Microsoft YaHei</div>
<div class="a" style="left:632px;top:312px;font-size:12px;color:#f2f2f2">大小</div>
<div class="a" style="left:663px;top:309px;width:31px;height:20px;background:#272727;border-radius:2px"></div>
<div class="a" style="left:668px;top:313px;font-family:'Liberation Mono',monospace;font-size:11.5px;letter-spacing:-0.9px;color:#f6f6f6;white-space:nowrap">10.5</div>
<!-- group box 2 -->
<div class="a" style="left:554px;top:354px;width:150px;height:114px;border:1px solid #454545;border-right:none;border-bottom:none;border-radius:3px 0 0 0"></div>
<div class="a" style="left:565px;top:369px;font-size:12px;color:#f2f2f2">类型</div>
<div class="a" style="left:620px;top:366px;width:80px;height:20px;background:#3c3c3c;border:1px solid #565656;border-radius:3px"></div>
<div class="a" style="left:623px;top:368px;font-size:12px;color:#f2f2f2">填充文本</div>
<div class="a" style="left:565px;top:391px;font-size:12px;color:#f2f2f2">填充色</div>
<div class="a" style="left:668px;top:394px;width:32px;height:21px;background:#444;border:1px solid #575757;border-radius:3px"></div>
<div class="a" style="left:675px;top:399px;width:13px;height:13px;background:#ff0512;border-top:1px solid #e8e8e8;border-left:1px solid #e8e8e8"></div>
<div class="a" style="left:692px;top:401px;width:1.5px;height:1.5px;background:#eee"></div><div class="a" style="left:692px;top:405px;width:1.5px;height:1.5px;background:#eee"></div><div class="a" style="left:692px;top:409px;width:1.5px;height:1.5px;background:#eee"></div>
<div class="a" style="left:565px;top:422px;font-size:12px;color:#f2f2f2">描边色</div>
<div class="a" style="left:668px;top:424px;width:32px;height:22px;background:#5a5a5a;border:1px solid #666;border-radius:3px"></div>
<div class="a" style="left:675px;top:429px;width:13px;height:12px;background:#3a3a3a;border-top:1px solid #d0d0d0;border-left:1px solid #d0d0d0;border-right:1px solid #2a2a2a;border-bottom:1px solid #2a2a2a"></div>
<div class="a" style="left:565px;top:455px;width:40px;height:13px;overflow:hidden"><div class="a" style="left:0;top:1px;font-size:12px;color:#f2f2f2">线宽</div></div>
<div class="a" style="left:668px;top:454px;width:30px;height:14px;background:#272727"></div>
<div class="a" style="left:671px;top:457px;font-family:'Liberation Serif',serif;font-size:11px;color:#8a8a8a">1</div>
<!-- inner scrollbar -->
<div class="a" style="left:694px;top:196px;width:13px;height:272px;background:#3e3e3e"></div>
<div class="a" style="left:694px;top:196px;width:13px;height:13px;background:#555;border:1px solid #626262"></div>
<div class="a" style="left:694px;top:210px;width:13px;height:121px;background:#525252;border:1px solid #5c5c5c"></div>
<div class="a" style="left:694px;top:455px;width:13px;height:13px;background:#555;border:1px solid #626262"></div>
<!-- right column -->
<div class="a" style="left:710px;top:165px;width:29px;height:307px;background:#454545;border-left:1px solid #2e2e2e;border-right:1px solid #565656;border-bottom:1px solid #565656"></div>
<div class="a" style="left:710px;top:166px;width:26px;height:48px;background:linear-gradient(90deg,#555,#4c4c4c);border:1px solid #5e5e5e;border-left:none;border-radius:0 4px 4px 0"></div>
<div class="a" style="left:739px;top:165px;width:3px;height:342px;background:#2b2b2b"></div>
<svg style="left:0;top:0" width="743" height="508" viewBox="0 0 743 508">
<!-- doc scroll chevrons -->
<path d="M512 175 L515.5 171.5 L519 175" fill="none" stroke="#e0e0e0" stroke-width="1.6"/>
<path d="M512 463.5 L515.5 467 L519 463.5" fill="none" stroke="#e0e0e0" stroke-width="1.6"/>
<!-- panel chevrons -->
<path d="M697 205 L700.5 201.5 L704 205" fill="none" stroke="#e0e0e0" stroke-width="1.6"/>
<path d="M697 459.5 L700.5 463 L704 459.5" fill="none" stroke="#e0e0e0" stroke-width="1.6"/>
<!-- tree triangles -->
<path d="M539.4 205.1 H547 L543.2 209.1 Z" fill="#a8a8a8"/>
<path d="M539.4 233 H547 L543.2 228.8 Z" fill="#a8a8a8"/>
<!-- sliders -->
<path d="M717 182.5 H733.2 M717 193.7 H728" stroke="#f2f2f2" stroke-width="1.2"/>
<circle cx="725.5" cy="182.5" r="2.2" fill="#f2f2f2"/>
<circle cx="730.3" cy="193.7" r="2.1" fill="#4c4c4c" stroke="#f2f2f2" stroke-width="1.1"/>
<!-- splitter grip -->
<g fill="#6a6a6a"><rect x="525" y="312" width="1.6" height="1.6"/><rect x="525" y="315" width="1.6" height="1.6"/><rect x="525" y="318" width="1.6" height="1.6"/><rect x="525" y="321" width="1.6" height="1.6"/><rect x="525" y="324" width="1.6" height="1.6"/><rect x="525" y="327" width="1.6" height="1.6"/></g>
</svg>
</div>
<!-- STATUS -->
<div id="status"><div class="a" style="left:1px;top:473px;width:741px;height:34px;background:#363636"></div>
<div class="a" style="left:38px;top:472px;width:485px;height:1px;background:#242424"></div>
<div class="a" style="left:3px;top:484px;font-size:12px;letter-spacing:0.22px;color:#f0f0f0;white-space:nowrap">页面 2/34 | 宽度: 595点 高度: 842点 对象: 26</div>
<svg style="left:0;top:0" width="743" height="508" viewBox="0 0 743 508">
<g fill="#7a7a7a">
<rect x="739" y="495" width="2" height="2"/>
<rect x="736" y="498" width="2" height="2"/><rect x="739" y="498" width="2" height="2"/>
<rect x="733" y="501" width="2" height="2"/><rect x="736" y="501" width="2" height="2"/><rect x="739" y="501" width="2" height="2"/>
<rect x="730" y="504" width="2" height="2"/><rect x="733" y="504" width="2" height="2"/><rect x="736" y="504" width="2" height="2"/><rect x="739" y="504" width="2" height="2"/>
</g>
</svg>
</div>

<!-- window border lines -->
<div class="a" style="left:0;top:0;width:743px;height:1px;background:#2a8ba6"></div>
<div class="a" style="left:0;top:31px;width:743px;height:1px;background:#1f4552"></div>
<div class="a" style="left:0;top:30px;width:743px;height:1px;background:#3f98ae"></div>
<div class="a" style="left:1px;top:31px;width:1px;height:476px;background:#1f4552"></div>
<div class="a" style="left:741px;top:32px;width:1px;height:475px;background:#2b3538"></div>
<div class="a" style="left:0;top:31px;width:1px;height:477px;background:#4289a0"></div>
<div class="a" style="left:742px;top:31px;width:1px;height:477px;background:#3a95ad"></div>
<div class="a" style="left:1px;top:506px;width:741px;height:1px;background:#22444e"></div>
<div class="a" style="left:0;top:507px;width:743px;height:1px;background:#3f8da2"></div>
</body></html>
